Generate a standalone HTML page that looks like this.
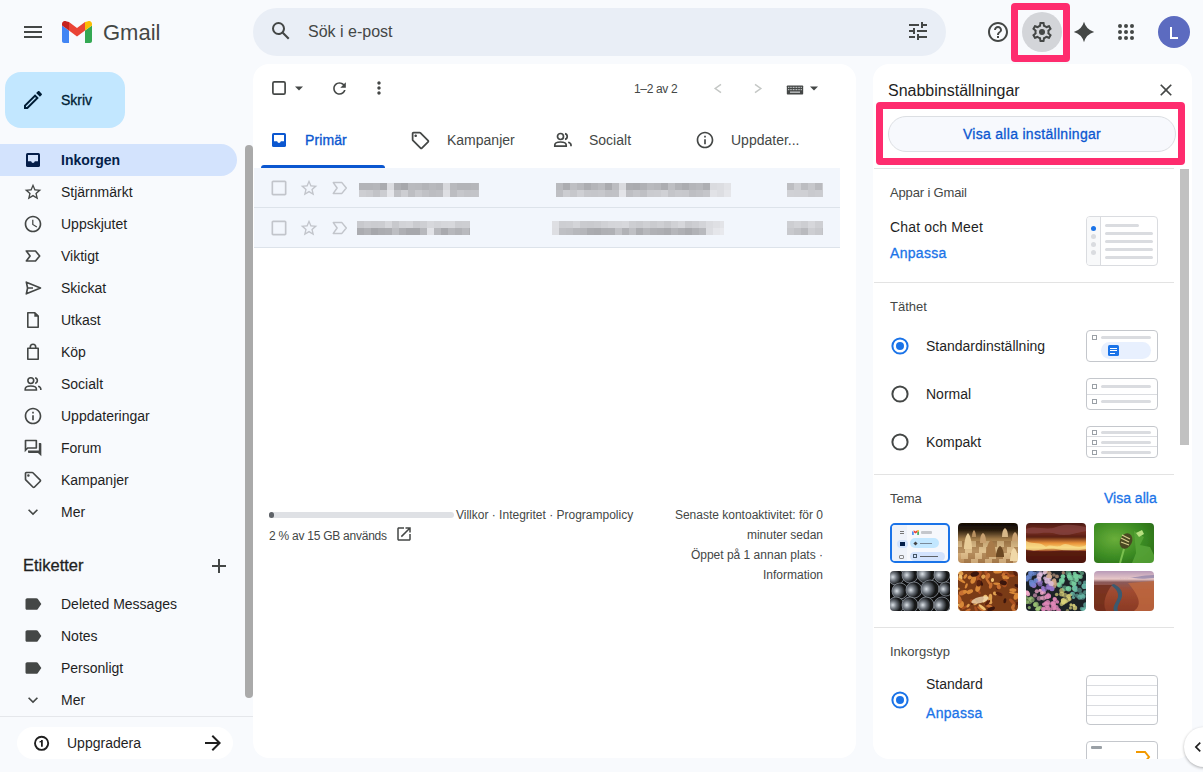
<!DOCTYPE html>
<html><head><meta charset="utf-8">
<style>
*{box-sizing:border-box;margin:0;padding:0}
html,body{width:1203px;height:772px;overflow:hidden;background:#f8fafd;font-family:"Liberation Sans",sans-serif;color:#1f1f1f}
.a{position:absolute}
svg{display:block}
.nav{position:absolute;left:0;height:32px;width:237px;display:flex;align-items:center;font-size:14px;color:#1f1f1f}
.nav .ic{position:absolute;left:23px;top:6px;width:20px;height:20px}
.nav .t{position:absolute;left:61px;top:8px;line-height:16px}
.sel{background:#d3e3fd;border-radius:0 16px 16px 0;font-weight:bold;color:#041e49}
.txt{position:absolute;white-space:nowrap}
.med{-webkit-text-stroke:0.3px currentColor}
</style></head><body>

<!-- header -->
<div class="a" style="left:24px;top:26px;width:18px;height:2px;background:#444746"></div>
<div class="a" style="left:24px;top:31px;width:18px;height:2px;background:#444746"></div>
<div class="a" style="left:24px;top:36px;width:18px;height:2px;background:#444746"></div>

<svg class="a" style="left:62px;top:21px" width="30" height="22" viewBox="0 0 30 22">
  <path d="M2 22h5V9.5L0 4.5V20c0 1.1.9 2 2 2z" fill="#4285f4"/>
  <path d="M23 22h5c1.1 0 2-.9 2-2V4.5l-7 5z" fill="#34a853"/>
  <path d="M23 1v8.5l7-5V3c0-2.5-2.8-3.9-4.8-2.4z" fill="#fbbc04"/>
  <path d="M7 9.5V1l8 6 8-6v8.5l-8 6z" fill="#ea4335"/>
  <path d="M0 3v1.5l7 5V1L4.8.6C2.8-.9 0 .5 0 3z" fill="#c5221f"/>
</svg>
<div class="txt" style="left:103px;top:19px;font-size:22px;line-height:28px;color:#444746">Gmail</div>


<!-- compose -->
<div class="a" style="left:5px;top:72px;width:120px;height:56px;border-radius:16px;background:#c2e7ff"></div>
<svg class="a" style="left:21px;top:88px" width="24" height="24" viewBox="0 0 24 24"><path fill="#001d35" d="M3 17.25V21h3.75L17.81 9.94l-3.75-3.75L3 17.25zM5.92 19H5v-.92l9.06-9.06.92.92L5.92 19zM20.71 5.63l-2.34-2.34c-.2-.2-.45-.29-.71-.29s-.51.1-.7.29l-1.83 1.83 3.75 3.75 1.83-1.83c.39-.39.39-1.02 0-1.41z"/></svg>
<div class="txt med" style="left:61px;top:92px;font-size:14px;line-height:16px;color:#001d35">Skriv</div>

<!-- nav -->
<div class="nav sel" style="top:144px"><svg class="ic" width="20" height="20" viewBox="0 0 20 20" style="left:23px;top:6px"><rect x="3" y="3" width="14" height="14" rx="1.6" fill="#041e49"/><path d="M5 5h10v6.3h-3.2c-.3 1-1 1.6-1.8 1.6s-1.5-.6-1.8-1.6H5z" fill="#d3e3fd"/></svg><span class="t">Inkorgen</span></div>
<div class="nav" style="top:176px"><svg class="ic" width="20" height="20" viewBox="0 0 24 24"><path fill="#444746" d="M22 9.24l-7.19-.62L12 2 9.19 8.63 2 9.24l5.46 4.73L5.82 21 12 17.27 18.18 21l-1.63-7.03L22 9.24zM12 15.4l-3.76 2.27 1-4.28-3.32-2.88 4.38-.38L12 6.1l1.71 4.04 4.38.38-3.32 2.880 1 4.28L12 15.4z"/></svg><span class="t">Stjärnmärkt</span></div>
<div class="nav" style="top:208px"><svg class="ic" width="20" height="20" viewBox="0 0 24 24"><path fill="#444746" d="M11.99 2C6.47 2 2 6.48 2 12s4.47 10 9.99 10C17.52 22 22 17.52 22 12S17.52 2 11.99 2zM12 20c-4.42 0-8-3.58-8-8s3.58-8 8-8 8 3.58 8 8-3.58 8-8 8zm.5-13H11v6l5.25 3.15.75-1.23-4.5-2.67z"/></svg><span class="t">Uppskjutet</span></div>
<div class="nav" style="top:240px"><svg class="ic" width="20" height="20" viewBox="0 0 24 24"><path fill="none" stroke="#444746" stroke-width="2" stroke-linejoin="round" d="M4 6h11l5 6-5 6H4l4.5-6z"/></svg><span class="t">Viktigt</span></div>
<div class="nav" style="top:272px"><svg class="ic" width="20" height="20" viewBox="0 0 24 24"><path fill="none" stroke="#444746" stroke-width="2" stroke-linejoin="round" d="M4 5l17 7-17 7 1.5-7zM5.5 12H12"/></svg><span class="t">Skickat</span></div>
<div class="nav" style="top:304px"><svg class="ic" width="20" height="20" viewBox="0 0 20 20"><path fill="none" stroke="#444746" stroke-width="1.6" stroke-linejoin="round" d="M4.8 2.7h7l3.4 3.4v11.1H4.8z"/><path fill="#444746" d="M11.3 2.7h.8l3.1 3.1v.9h-3.9z"/></svg><span class="t">Utkast</span></div>
<div class="nav" style="top:336px"><svg class="ic" width="20" height="20" viewBox="0 0 20 20"><path fill="none" stroke="#444746" stroke-width="1.6" stroke-linejoin="round" d="M4.8 6.3h10.4v10.9H4.8zM7.3 6.3V5a2.7 2.7 0 0 1 5.4 0v1.3"/></svg><span class="t">Köp</span></div>
<div class="nav" style="top:368px"><svg class="ic" width="20" height="20" viewBox="0 0 20 20"><g fill="none" stroke="#444746" stroke-width="1.6"><circle cx="7.8" cy="6.6" r="2.9"/><path d="M2.2 16v-1c0-1.8 2.5-3 5.6-3s5.6 1.2 5.6 3v1z"/><path d="M12.2 3.8a2.9 2.9 0 0 1 0 5.6M15.2 12.2c1.5.5 2.6 1.4 2.6 2.8v1"/></g></svg><span class="t">Socialt</span></div>
<div class="nav" style="top:400px"><svg class="ic" width="20" height="20" viewBox="0 0 24 24"><path fill="#444746" d="M11 7h2v2h-2zm0 4h2v6h-2zm1-9C6.48 2 2 6.48 2 12s4.48 10 10 10 10-4.48 10-10S17.52 2 12 2zm0 18c-4.41 0-8-3.59-8-8s3.59-8 8-8 8 3.59 8 8-3.59 8-8 8z"/></svg><span class="t">Uppdateringar</span></div>
<div class="nav" style="top:432px"><svg class="ic" width="20" height="20" viewBox="0 0 24 24"><path fill="#444746" d="M15 4v7H5.17L4 12.17V4h11m1-2H3c-.55 0-1 .45-1 1v14l4-4h10c.55 0 1-.45 1-1V3c0-.55-.45-1-1-1zm5 4h-2v9H6v2c0 .55.45 1 1 1h11l4 4V7c0-.55-.45-1-1-1z"/></svg><span class="t">Forum</span></div>
<div class="nav" style="top:464px"><svg class="ic" width="20" height="20" viewBox="0 0 24 24"><path fill="#444746" d="M21.41 11.41l-8.83-8.83c-.37-.37-.88-.58-1.41-.58H4c-1.1 0-2 .9-2 2v7.17c0 .53.21 1.04.59 1.41l8.83 8.830c.78.78 2.05.78 2.83 0l7.17-7.17c.78-.78.78-2.04-.01-2.83zM12.83 20L4 11.17V4h7.17L20 12.83 12.83 20zM6.5 5C7.33 5 8 5.67 8 6.5S7.33 8 6.5 8 5 7.33 5 6.5 5.67 5 6.5 5z"/></svg><span class="t">Kampanjer</span></div>
<div class="nav" style="top:496px"><svg class="ic" width="20" height="20" viewBox="0 0 24 24"><path fill="#444746" d="M16.59 8.59L12 13.17 7.41 8.59 6 10l6 6 6-6z"/></svg><span class="t">Mer</span></div>

<div class="txt med" style="left:23px;top:555px;font-size:16.5px;line-height:20px;color:#1f1f1f">Etiketter</div>
<svg class="a" style="left:207px;top:554px" width="24" height="24" viewBox="0 0 24 24"><path fill="#444746" d="M19 13h-6v6h-2v-6H5v-2h6V5h2v6h6v2z"/></svg>

<div class="nav" style="top:588px"><svg class="ic" width="20" height="20" viewBox="0 0 24 24"><path fill="#444746" d="M17.63 5.84C17.27 5.33 16.67 5 16 5L5 5.01C3.9 5.01 3 5.9 3 7v10c0 1.1.9 1.99 2 1.99L16 19c.67 0 1.27-.33 1.63-.84L22 12l-4.37-6.16z"/></svg><span class="t">Deleted Messages</span></div>
<div class="nav" style="top:620px"><svg class="ic" width="20" height="20" viewBox="0 0 24 24"><path fill="#444746" d="M17.63 5.84C17.27 5.33 16.67 5 16 5L5 5.01C3.9 5.01 3 5.9 3 7v10c0 1.1.9 1.99 2 1.99L16 19c.67 0 1.27-.33 1.63-.84L22 12l-4.37-6.16z"/></svg><span class="t">Notes</span></div>
<div class="nav" style="top:652px"><svg class="ic" width="20" height="20" viewBox="0 0 24 24"><path fill="#444746" d="M17.63 5.84C17.27 5.33 16.67 5 16 5L5 5.01C3.9 5.01 3 5.9 3 7v10c0 1.1.9 1.99 2 1.99L16 19c.67 0 1.27-.33 1.63-.84L22 12l-4.37-6.16z"/></svg><span class="t">Personligt</span></div>
<div class="nav" style="top:684px"><svg class="ic" width="20" height="20" viewBox="0 0 24 24"><path fill="#444746" d="M16.59 8.59L12 13.17 7.41 8.59 6 10l6 6 6-6z"/></svg><span class="t">Mer</span></div>

<!-- sidebar scrollbar -->
<div class="a" style="left:245px;top:145px;width:8px;height:553px;border-radius:4px;background:#aaaaaa"></div>
<div class="a" style="left:0;top:716px;width:253px;height:1px;background:#e5e7eb"></div>
<div class="a" style="left:17px;top:727px;width:216px;height:32px;border-radius:16px;background:#fff"></div>
<svg class="a" style="left:32px;top:734px" width="20" height="20" viewBox="0 0 20 20"><circle cx="9.6" cy="9.3" r="6.6" fill="none" stroke="#1f1f1f" stroke-width="1.9"/><path fill="#1f1f1f" d="M9 6h1.8v6.8H9zM7.6 7.1L9.4 6h.6v1.6L7.6 8.7z"/></svg>
<div class="txt" style="left:67px;top:735px;font-size:14px;line-height:16px;color:#1f1f1f">Uppgradera</div>
<svg class="a" style="left:201px;top:731px" width="24" height="24" viewBox="0 0 24 24"><path fill="#1f1f1f" d="M12 4l-1.41 1.41L16.17 11H4v2h12.17l-5.58 5.59L12 20l8-8z"/></svg>

<!-- search -->
<div class="a" style="left:253px;top:8px;width:693px;height:48px;border-radius:24px;background:#e9eef6"></div>
<svg class="a" style="left:269px;top:19px" width="24" height="24" viewBox="0 0 24 24"><path fill="#444746" d="M20.49 19l-5.73-5.73C15.53 12.2 16 10.91 16 9.5A6.5 6.5 0 1 0 9.5 16c1.41 0 2.7-.47 3.77-1.24L19 20.49 20.49 19zM5 9.5C5 7.01 7.01 5 9.5 5S14 7.01 14 9.5 11.99 14 9.5 14 5 11.99 5 9.5z"/></svg>
<div class="txt" style="left:308px;top:22px;font-size:16px;line-height:20px;color:#444746">Sök i e-post</div>
<svg class="a" style="left:906px;top:19px" width="24" height="24" viewBox="0 0 24 24"><path fill="#444746" d="M3 17v2h6v-2H3zM3 5v2h10V5H3zm10 16v-2h8v-2h-8v-2h-2v6h2zM7 9v2H3v2h4v2h2V9H7zm14 4v-2H11v2h10zm-6-4h2V7h4V5h-4V3h-2v6z"/></svg>

<!-- main panel -->
<div class="a" style="left:253px;top:64px;width:603px;height:694px;border-radius:16px;background:#fff"></div>

<!-- quick settings panel -->
<div class="a" style="left:873px;top:64px;width:319px;height:695px;border-radius:16px;background:#fff"></div>


<!-- toolbar -->
<svg class="a" style="left:270px;top:79px" width="18" height="18" viewBox="0 0 18 18"><rect x="2.9" y="2.9" width="12.2" height="12.2" rx="1.4" fill="none" stroke="#444746" stroke-width="1.7"/></svg>
<svg class="a" style="left:289px;top:78px" width="20" height="20" viewBox="0 0 20 20"><path fill="#444746" d="M6 8.5l4 4 4-4z"/></svg>
<svg class="a" style="left:330px;top:79px" width="19" height="19" viewBox="0 0 24 24"><path fill="#444746" d="M17.65 6.35C16.2 4.9 14.21 4 12 4c-4.42 0-7.99 3.58-7.99 8s3.57 8 7.990 8c3.73 0 6.84-2.55 7.73-6h-2.08c-.82 2.33-3.04 4-5.65 4-3.31 0-6-2.69-6-6s2.69-6 6-6c1.66 0 3.14.69 4.22 1.78L13 11h7V4l-2.35 2.35z"/></svg>
<svg class="a" style="left:369px;top:78px" width="20" height="20" viewBox="0 0 24 24"><path fill="#444746" d="M12 8c1.1 0 2-.9 2-2s-.9-2-2-2-2 .9-2 2 .9 2 2 2zm0 2c-1.1 0-2 .9-2 2s.9 2 2 2 2-.9 2-2-.9-2-2-2zm0 6c-1.1 0-2 .9-2 2s.9 2 2 2 2-.9 2-2-.9-2-2-2z"/></svg>
<div class="txt" style="left:634px;top:82px;font-size:12px;line-height:14px;color:#444746;letter-spacing:-0.35px">1–2 av 2</div>
<svg class="a" style="left:712px;top:82px" width="12" height="13" viewBox="0 0 12 13"><path d="M9 2.3L3.2 6.5 9 10.7" fill="none" stroke="#c4c7c5" stroke-width="1.5"/></svg>
<svg class="a" style="left:752px;top:82px" width="12" height="13" viewBox="0 0 12 13"><path d="M3 2.3L8.8 6.5 3 10.7" fill="none" stroke="#c4c7c5" stroke-width="1.5"/></svg>
<svg class="a" style="left:786px;top:85px" width="18" height="10" viewBox="0 0 19 11"><rect x="0.5" y="0.5" width="18" height="10" rx="0.8" fill="#444746"/><rect x="2.00" y="2" width="1" height="1.2" fill="#d8dadc"/><rect x="3.75" y="2" width="1" height="1.2" fill="#d8dadc"/><rect x="5.50" y="2" width="1" height="1.2" fill="#d8dadc"/><rect x="7.25" y="2" width="1" height="1.2" fill="#d8dadc"/><rect x="9.00" y="2" width="1" height="1.2" fill="#d8dadc"/><rect x="10.75" y="2" width="1" height="1.2" fill="#d8dadc"/><rect x="12.50" y="2" width="1" height="1.2" fill="#d8dadc"/><rect x="14.25" y="2" width="1" height="1.2" fill="#d8dadc"/><rect x="16.00" y="2" width="1" height="1.2" fill="#d8dadc"/><rect x="2.00" y="4.5" width="1" height="1.2" fill="#d8dadc"/><rect x="3.75" y="4.5" width="1" height="1.2" fill="#d8dadc"/><rect x="5.50" y="4.5" width="1" height="1.2" fill="#d8dadc"/><rect x="7.25" y="4.5" width="1" height="1.2" fill="#d8dadc"/><rect x="9.00" y="4.5" width="1" height="1.2" fill="#d8dadc"/><rect x="10.75" y="4.5" width="1" height="1.2" fill="#d8dadc"/><rect x="12.50" y="4.5" width="1" height="1.2" fill="#d8dadc"/><rect x="14.25" y="4.5" width="1" height="1.2" fill="#d8dadc"/><rect x="16.00" y="4.5" width="1" height="1.2" fill="#d8dadc"/><rect x="4" y="7.2" width="11" height="1.3" fill="#d8dadc"/></svg>
<svg class="a" style="left:804px;top:78px" width="20" height="20" viewBox="0 0 20 20"><path fill="#444746" d="M6 8.5l4 4 4-4z"/></svg>

<!-- tabs -->
<svg class="a" style="left:269px;top:130px" width="20" height="20" viewBox="0 0 20 20"><rect x="3" y="3" width="14" height="14" rx="1.6" fill="#0b57d0"/><path d="M5 5h10v6.3h-3.2c-.3 1-1 1.6-1.8 1.6s-1.5-.6-1.8-1.6H5z" fill="#fff"/></svg>
<div class="txt" style="left:305px;top:132px;font-size:14px;line-height:16px;color:#0b57d0;-webkit-text-stroke:0.35px #0b57d0;letter-spacing:0.1px">Primär</div>
<div class="a" style="left:261px;top:165px;width:124px;height:3px;border-radius:3px 3px 0 0;background:#0b57d0"></div>
<svg class="a" style="left:410px;top:130px" width="21" height="21" viewBox="0 0 24 24"><path fill="#444746" d="M21.41 11.41l-8.83-8.83c-.37-.37-.88-.58-1.41-.58H4c-1.1 0-2 .9-2 2v7.17c0 .53.21 1.04.59 1.41l8.83 8.830c.78.78 2.05.78 2.83 0l7.17-7.17c.78-.78.78-2.04-.01-2.83zM12.83 20L4 11.17V4h7.17L20 12.83 12.83 20zM6.5 5C7.33 5 8 5.67 8 6.5S7.33 8 6.5 8 5 7.33 5 6.5 5.67 5 6.5 5z"/></svg>
<div class="txt" style="left:447px;top:132px;font-size:14px;line-height:16px;color:#444746">Kampanjer</div>
<svg class="a" style="left:553px;top:130px" width="20" height="20" viewBox="0 0 20 20"><g fill="none" stroke="#444746" stroke-width="1.7"><circle cx="7.5" cy="6.5" r="3"/><path d="M1.8 16.2v-1.2c0-1.8 2.6-3 5.7-3s5.7 1.2 5.7 3v1.2z"/><path d="M12 3.6a3 3 0 0 1 0 5.8M15.2 12.3c1.6.5 2.8 1.4 2.8 2.7v1.2"/></g></svg>
<div class="txt" style="left:589px;top:132px;font-size:14px;line-height:16px;color:#444746">Socialt</div>
<svg class="a" style="left:695px;top:130px" width="20" height="20" viewBox="0 0 24 24"><path fill="#444746" d="M11 7h2v2h-2zm0 4h2v6h-2zm1-9C6.48 2 2 6.48 2 12s4.48 10 10 10 10-4.48 10-10S17.52 2 12 2zm0 18c-4.41 0-8-3.59-8-8s3.59-8 8-8 8 3.59 8 8-3.59 8-8 8z"/></svg>
<div class="txt" style="left:731px;top:132px;font-size:14px;line-height:16px;color:#444746">Uppdater...</div>

<!-- rows -->
<div class="a" style="left:254px;top:168px;width:586px;height:80px;background:#f2f6fc"></div>
<div class="a" style="left:254px;top:207px;width:586px;height:1px;background:#dde3ea"></div>
<div class="a" style="left:254px;top:247px;width:586px;height:1px;background:#dde3ea"></div>
<svg class="a" style="left:269px;top:178px" width="20" height="20" viewBox="0 0 24 24"><path fill="#c2c5cb" d="M19 5v14H5V5h14m0-2H5c-1.1 0-2 .9-2 2v14c0 1.1.9 2 2 2h14c1.1 0 2-.9 2-2V5c0-1.1-.9-2-2-2z"/></svg>
<svg class="a" style="left:299px;top:178px" width="20" height="20" viewBox="0 0 24 24"><path fill="#c2c5cb" d="M22 9.24l-7.19-.62L12 2 9.19 8.63 2 9.24l5.46 4.73L5.82 21 12 17.27 18.18 21l-1.63-7.03L22 9.24zM12 15.4l-3.76 2.27 1-4.28-3.32-2.88 4.38-.38L12 6.1l1.71 4.04 4.38.38-3.32 2.88 1 4.28L12 15.4z"/></svg>
<svg class="a" style="left:330px;top:178px" width="20" height="20" viewBox="0 0 20 20"><path fill="none" stroke="#c2c5cb" stroke-width="1.5" stroke-linejoin="round" d="M3.3 4.6h8.6l4.4 5.4-4.4 5.4H3.3l3.8-5.4z"/></svg>
<svg class="a" style="left:269px;top:218px" width="20" height="20" viewBox="0 0 24 24"><path fill="#c2c5cb" d="M19 5v14H5V5h14m0-2H5c-1.1 0-2 .9-2 2v14c0 1.1.9 2 2 2h14c1.1 0 2-.9 2-2V5c0-1.1-.9-2-2-2z"/></svg>
<svg class="a" style="left:299px;top:218px" width="20" height="20" viewBox="0 0 24 24"><path fill="#c2c5cb" d="M22 9.24l-7.19-.62L12 2 9.19 8.63 2 9.24l5.46 4.73L5.82 21 12 17.27 18.18 21l-1.63-7.03L22 9.24zM12 15.4l-3.76 2.27 1-4.28-3.32-2.88 4.38-.38L12 6.1l1.71 4.04 4.38.38-3.32 2.88 1 4.28L12 15.4z"/></svg>
<svg class="a" style="left:330px;top:218px" width="20" height="20" viewBox="0 0 20 20"><path fill="none" stroke="#c2c5cb" stroke-width="1.5" stroke-linejoin="round" d="M3.3 4.6h8.6l4.4 5.4-4.4 5.4H3.3l3.8-5.4z"/></svg>

<div class="a" style="filter:blur(0.5px)"><div class="a" style="left:359px;top:183px;width:7px;height:7px;background:rgb(179,180,184)"></div><div class="a" style="left:359px;top:190px;width:7px;height:7px;background:rgb(205,206,210)"></div><div class="a" style="left:366px;top:183px;width:7px;height:7px;background:rgb(179,180,184)"></div><div class="a" style="left:366px;top:190px;width:7px;height:7px;background:rgb(202,203,207)"></div><div class="a" style="left:373px;top:183px;width:7px;height:7px;background:rgb(181,182,186)"></div><div class="a" style="left:373px;top:190px;width:7px;height:7px;background:rgb(194,195,199)"></div><div class="a" style="left:380px;top:183px;width:7px;height:7px;background:rgb(170,171,175)"></div><div class="a" style="left:380px;top:190px;width:7px;height:7px;background:rgb(204,205,209)"></div><div class="a" style="left:387px;top:183px;width:7px;height:7px;background:rgb(220,221,225)"></div><div class="a" style="left:387px;top:190px;width:7px;height:7px;background:rgb(229,230,234)"></div><div class="a" style="left:394px;top:183px;width:7px;height:7px;background:rgb(174,175,179)"></div><div class="a" style="left:394px;top:190px;width:7px;height:7px;background:rgb(192,193,197)"></div><div class="a" style="left:401px;top:183px;width:7px;height:7px;background:rgb(167,168,172)"></div><div class="a" style="left:401px;top:190px;width:7px;height:7px;background:rgb(205,206,210)"></div><div class="a" style="left:408px;top:183px;width:7px;height:7px;background:rgb(185,186,190)"></div><div class="a" style="left:408px;top:190px;width:7px;height:7px;background:rgb(189,190,194)"></div><div class="a" style="left:415px;top:183px;width:7px;height:7px;background:rgb(184,185,189)"></div><div class="a" style="left:415px;top:190px;width:7px;height:7px;background:rgb(200,201,205)"></div><div class="a" style="left:422px;top:183px;width:7px;height:7px;background:rgb(179,180,184)"></div><div class="a" style="left:422px;top:190px;width:7px;height:7px;background:rgb(193,194,198)"></div><div class="a" style="left:429px;top:183px;width:7px;height:7px;background:rgb(184,185,189)"></div><div class="a" style="left:429px;top:190px;width:7px;height:7px;background:rgb(188,189,193)"></div><div class="a" style="left:436px;top:183px;width:7px;height:7px;background:rgb(181,182,186)"></div><div class="a" style="left:436px;top:190px;width:7px;height:7px;background:rgb(190,191,195)"></div><div class="a" style="left:443px;top:183px;width:7px;height:7px;background:rgb(216,217,221)"></div><div class="a" style="left:443px;top:190px;width:7px;height:7px;background:rgb(222,223,227)"></div><div class="a" style="left:450px;top:183px;width:7px;height:7px;background:rgb(184,185,189)"></div><div class="a" style="left:450px;top:190px;width:7px;height:7px;background:rgb(188,189,193)"></div><div class="a" style="left:457px;top:183px;width:7px;height:7px;background:rgb(179,180,184)"></div><div class="a" style="left:457px;top:190px;width:7px;height:7px;background:rgb(198,199,203)"></div><div class="a" style="left:464px;top:183px;width:7px;height:7px;background:rgb(179,180,184)"></div><div class="a" style="left:464px;top:190px;width:7px;height:7px;background:rgb(194,195,199)"></div><div class="a" style="left:471px;top:183px;width:7px;height:7px;background:rgb(181,182,186)"></div><div class="a" style="left:471px;top:190px;width:7px;height:7px;background:rgb(195,196,200)"></div><div class="a" style="left:478px;top:183px;width:1px;height:7px;background:rgb(185,186,190)"></div><div class="a" style="left:478px;top:190px;width:1px;height:7px;background:rgb(197,198,202)"></div><div class="a" style="left:556px;top:183px;width:7px;height:7px;background:rgb(185,186,190)"></div><div class="a" style="left:556px;top:190px;width:7px;height:7px;background:rgb(190,191,195)"></div><div class="a" style="left:563px;top:183px;width:7px;height:7px;background:rgb(172,173,177)"></div><div class="a" style="left:563px;top:190px;width:7px;height:7px;background:rgb(204,205,209)"></div><div class="a" style="left:570px;top:183px;width:7px;height:7px;background:rgb(190,191,195)"></div><div class="a" style="left:570px;top:190px;width:7px;height:7px;background:rgb(198,199,203)"></div><div class="a" style="left:577px;top:183px;width:7px;height:7px;background:rgb(183,184,188)"></div><div class="a" style="left:577px;top:190px;width:7px;height:7px;background:rgb(207,208,212)"></div><div class="a" style="left:584px;top:183px;width:7px;height:7px;background:rgb(172,173,177)"></div><div class="a" style="left:584px;top:190px;width:7px;height:7px;background:rgb(198,199,203)"></div><div class="a" style="left:591px;top:183px;width:7px;height:7px;background:rgb(180,181,185)"></div><div class="a" style="left:591px;top:190px;width:7px;height:7px;background:rgb(197,198,202)"></div><div class="a" style="left:598px;top:183px;width:7px;height:7px;background:rgb(186,187,191)"></div><div class="a" style="left:598px;top:190px;width:7px;height:7px;background:rgb(199,200,204)"></div><div class="a" style="left:605px;top:183px;width:7px;height:7px;background:rgb(170,171,175)"></div><div class="a" style="left:605px;top:190px;width:7px;height:7px;background:rgb(192,193,197)"></div><div class="a" style="left:612px;top:183px;width:7px;height:7px;background:rgb(188,189,193)"></div><div class="a" style="left:612px;top:190px;width:7px;height:7px;background:rgb(193,194,198)"></div><div class="a" style="left:619px;top:183px;width:7px;height:7px;background:rgb(218,219,223)"></div><div class="a" style="left:619px;top:190px;width:7px;height:7px;background:rgb(227,228,232)"></div><div class="a" style="left:626px;top:183px;width:7px;height:7px;background:rgb(172,173,177)"></div><div class="a" style="left:626px;top:190px;width:7px;height:7px;background:rgb(190,191,195)"></div><div class="a" style="left:633px;top:183px;width:7px;height:7px;background:rgb(170,171,175)"></div><div class="a" style="left:633px;top:190px;width:7px;height:7px;background:rgb(196,197,201)"></div><div class="a" style="left:640px;top:183px;width:7px;height:7px;background:rgb(176,177,181)"></div><div class="a" style="left:640px;top:190px;width:7px;height:7px;background:rgb(191,192,196)"></div><div class="a" style="left:647px;top:183px;width:7px;height:7px;background:rgb(185,186,190)"></div><div class="a" style="left:647px;top:190px;width:7px;height:7px;background:rgb(202,203,207)"></div><div class="a" style="left:654px;top:183px;width:7px;height:7px;background:rgb(182,183,187)"></div><div class="a" style="left:654px;top:190px;width:7px;height:7px;background:rgb(203,204,208)"></div><div class="a" style="left:661px;top:183px;width:7px;height:7px;background:rgb(172,173,177)"></div><div class="a" style="left:661px;top:190px;width:7px;height:7px;background:rgb(208,209,213)"></div><div class="a" style="left:668px;top:183px;width:7px;height:7px;background:rgb(190,191,195)"></div><div class="a" style="left:668px;top:190px;width:7px;height:7px;background:rgb(196,197,201)"></div><div class="a" style="left:675px;top:183px;width:7px;height:7px;background:rgb(178,179,183)"></div><div class="a" style="left:675px;top:190px;width:7px;height:7px;background:rgb(200,201,205)"></div><div class="a" style="left:682px;top:183px;width:7px;height:7px;background:rgb(172,173,177)"></div><div class="a" style="left:682px;top:190px;width:7px;height:7px;background:rgb(199,200,204)"></div><div class="a" style="left:689px;top:183px;width:7px;height:7px;background:rgb(180,181,185)"></div><div class="a" style="left:689px;top:190px;width:7px;height:7px;background:rgb(190,191,195)"></div><div class="a" style="left:696px;top:183px;width:7px;height:7px;background:rgb(183,184,188)"></div><div class="a" style="left:696px;top:190px;width:7px;height:7px;background:rgb(193,194,198)"></div><div class="a" style="left:703px;top:183px;width:7px;height:7px;background:rgb(174,175,179)"></div><div class="a" style="left:703px;top:190px;width:7px;height:7px;background:rgb(197,198,202)"></div><div class="a" style="left:710px;top:183px;width:7px;height:7px;background:rgb(218,219,223)"></div><div class="a" style="left:710px;top:190px;width:7px;height:7px;background:rgb(225,226,230)"></div><div class="a" style="left:717px;top:183px;width:7px;height:7px;background:rgb(220,221,225)"></div><div class="a" style="left:717px;top:190px;width:7px;height:7px;background:rgb(221,222,226)"></div><div class="a" style="left:724px;top:183px;width:7px;height:7px;background:rgb(226,227,231)"></div><div class="a" style="left:724px;top:190px;width:7px;height:7px;background:rgb(229,230,234)"></div><div class="a" style="left:787px;top:183px;width:7px;height:7px;background:rgb(189,190,194)"></div><div class="a" style="left:787px;top:190px;width:7px;height:7px;background:rgb(208,209,213)"></div><div class="a" style="left:794px;top:183px;width:7px;height:7px;background:rgb(205,206,210)"></div><div class="a" style="left:794px;top:190px;width:7px;height:7px;background:rgb(207,208,212)"></div><div class="a" style="left:801px;top:183px;width:7px;height:7px;background:rgb(188,189,193)"></div><div class="a" style="left:801px;top:190px;width:7px;height:7px;background:rgb(207,208,212)"></div><div class="a" style="left:808px;top:183px;width:7px;height:7px;background:rgb(198,199,203)"></div><div class="a" style="left:808px;top:190px;width:7px;height:7px;background:rgb(201,202,206)"></div><div class="a" style="left:815px;top:183px;width:7px;height:7px;background:rgb(185,186,190)"></div><div class="a" style="left:815px;top:190px;width:7px;height:7px;background:rgb(203,204,208)"></div><div class="a" style="left:822px;top:183px;width:1px;height:7px;background:rgb(203,204,208)"></div><div class="a" style="left:822px;top:190px;width:1px;height:7px;background:rgb(204,205,209)"></div><div class="a" style="left:357px;top:221px;width:7px;height:7px;background:rgb(200,201,205)"></div><div class="a" style="left:357px;top:228px;width:7px;height:7px;background:rgb(171,172,176)"></div><div class="a" style="left:364px;top:221px;width:7px;height:7px;background:rgb(205,206,210)"></div><div class="a" style="left:364px;top:228px;width:7px;height:7px;background:rgb(177,178,182)"></div><div class="a" style="left:371px;top:221px;width:7px;height:7px;background:rgb(203,204,208)"></div><div class="a" style="left:371px;top:228px;width:7px;height:7px;background:rgb(166,167,171)"></div><div class="a" style="left:378px;top:221px;width:7px;height:7px;background:rgb(204,205,209)"></div><div class="a" style="left:378px;top:228px;width:7px;height:7px;background:rgb(171,172,176)"></div><div class="a" style="left:385px;top:221px;width:7px;height:7px;background:rgb(214,215,219)"></div><div class="a" style="left:385px;top:228px;width:7px;height:7px;background:rgb(173,174,178)"></div><div class="a" style="left:392px;top:221px;width:7px;height:7px;background:rgb(200,201,205)"></div><div class="a" style="left:392px;top:228px;width:7px;height:7px;background:rgb(189,190,194)"></div><div class="a" style="left:399px;top:221px;width:7px;height:7px;background:rgb(210,211,215)"></div><div class="a" style="left:399px;top:228px;width:7px;height:7px;background:rgb(174,175,179)"></div><div class="a" style="left:406px;top:221px;width:7px;height:7px;background:rgb(212,213,217)"></div><div class="a" style="left:406px;top:228px;width:7px;height:7px;background:rgb(167,168,172)"></div><div class="a" style="left:413px;top:221px;width:7px;height:7px;background:rgb(202,203,207)"></div><div class="a" style="left:413px;top:228px;width:7px;height:7px;background:rgb(167,168,172)"></div><div class="a" style="left:420px;top:221px;width:7px;height:7px;background:rgb(206,207,211)"></div><div class="a" style="left:420px;top:228px;width:7px;height:7px;background:rgb(183,184,188)"></div><div class="a" style="left:427px;top:221px;width:7px;height:7px;background:rgb(215,216,220)"></div><div class="a" style="left:427px;top:228px;width:7px;height:7px;background:rgb(226,227,231)"></div><div class="a" style="left:434px;top:221px;width:7px;height:7px;background:rgb(211,212,216)"></div><div class="a" style="left:434px;top:228px;width:7px;height:7px;background:rgb(184,185,189)"></div><div class="a" style="left:441px;top:221px;width:7px;height:7px;background:rgb(214,215,219)"></div><div class="a" style="left:441px;top:228px;width:7px;height:7px;background:rgb(169,170,174)"></div><div class="a" style="left:448px;top:221px;width:7px;height:7px;background:rgb(215,216,220)"></div><div class="a" style="left:448px;top:228px;width:7px;height:7px;background:rgb(183,184,188)"></div><div class="a" style="left:455px;top:221px;width:7px;height:7px;background:rgb(204,205,209)"></div><div class="a" style="left:455px;top:228px;width:7px;height:7px;background:rgb(177,178,182)"></div><div class="a" style="left:462px;top:221px;width:7px;height:7px;background:rgb(205,206,210)"></div><div class="a" style="left:462px;top:228px;width:7px;height:7px;background:rgb(185,186,190)"></div><div class="a" style="left:469px;top:221px;width:1px;height:7px;background:rgb(204,205,209)"></div><div class="a" style="left:469px;top:228px;width:1px;height:7px;background:rgb(174,175,179)"></div><div class="a" style="left:552px;top:221px;width:7px;height:7px;background:rgb(222,223,227)"></div><div class="a" style="left:552px;top:228px;width:7px;height:7px;background:rgb(221,222,226)"></div><div class="a" style="left:559px;top:221px;width:7px;height:7px;background:rgb(205,206,210)"></div><div class="a" style="left:559px;top:228px;width:7px;height:7px;background:rgb(191,192,196)"></div><div class="a" style="left:566px;top:221px;width:7px;height:7px;background:rgb(206,207,211)"></div><div class="a" style="left:566px;top:228px;width:7px;height:7px;background:rgb(189,190,194)"></div><div class="a" style="left:573px;top:221px;width:7px;height:7px;background:rgb(212,213,217)"></div><div class="a" style="left:573px;top:228px;width:7px;height:7px;background:rgb(183,184,188)"></div><div class="a" style="left:580px;top:221px;width:7px;height:7px;background:rgb(202,203,207)"></div><div class="a" style="left:580px;top:228px;width:7px;height:7px;background:rgb(181,182,186)"></div><div class="a" style="left:587px;top:221px;width:7px;height:7px;background:rgb(201,202,206)"></div><div class="a" style="left:587px;top:228px;width:7px;height:7px;background:rgb(171,172,176)"></div><div class="a" style="left:594px;top:221px;width:7px;height:7px;background:rgb(203,204,208)"></div><div class="a" style="left:594px;top:228px;width:7px;height:7px;background:rgb(169,170,174)"></div><div class="a" style="left:601px;top:221px;width:7px;height:7px;background:rgb(208,209,213)"></div><div class="a" style="left:601px;top:228px;width:7px;height:7px;background:rgb(175,176,180)"></div><div class="a" style="left:608px;top:221px;width:7px;height:7px;background:rgb(212,213,217)"></div><div class="a" style="left:608px;top:228px;width:7px;height:7px;background:rgb(176,177,181)"></div><div class="a" style="left:615px;top:221px;width:7px;height:7px;background:rgb(213,214,218)"></div><div class="a" style="left:615px;top:228px;width:7px;height:7px;background:rgb(194,195,199)"></div><div class="a" style="left:622px;top:221px;width:7px;height:7px;background:rgb(215,216,220)"></div><div class="a" style="left:622px;top:228px;width:7px;height:7px;background:rgb(177,178,182)"></div><div class="a" style="left:629px;top:221px;width:7px;height:7px;background:rgb(205,206,210)"></div><div class="a" style="left:629px;top:228px;width:7px;height:7px;background:rgb(191,192,196)"></div><div class="a" style="left:636px;top:221px;width:7px;height:7px;background:rgb(202,203,207)"></div><div class="a" style="left:636px;top:228px;width:7px;height:7px;background:rgb(172,173,177)"></div><div class="a" style="left:643px;top:221px;width:7px;height:7px;background:rgb(207,208,212)"></div><div class="a" style="left:643px;top:228px;width:7px;height:7px;background:rgb(183,184,188)"></div><div class="a" style="left:650px;top:221px;width:7px;height:7px;background:rgb(202,203,207)"></div><div class="a" style="left:650px;top:228px;width:7px;height:7px;background:rgb(176,177,181)"></div><div class="a" style="left:657px;top:221px;width:7px;height:7px;background:rgb(206,207,211)"></div><div class="a" style="left:657px;top:228px;width:7px;height:7px;background:rgb(174,175,179)"></div><div class="a" style="left:664px;top:221px;width:7px;height:7px;background:rgb(200,201,205)"></div><div class="a" style="left:664px;top:228px;width:7px;height:7px;background:rgb(170,171,175)"></div><div class="a" style="left:671px;top:221px;width:7px;height:7px;background:rgb(208,209,213)"></div><div class="a" style="left:671px;top:228px;width:7px;height:7px;background:rgb(181,182,186)"></div><div class="a" style="left:678px;top:221px;width:7px;height:7px;background:rgb(214,215,219)"></div><div class="a" style="left:678px;top:228px;width:7px;height:7px;background:rgb(175,176,180)"></div><div class="a" style="left:685px;top:221px;width:7px;height:7px;background:rgb(201,202,206)"></div><div class="a" style="left:685px;top:228px;width:7px;height:7px;background:rgb(169,170,174)"></div><div class="a" style="left:692px;top:221px;width:7px;height:7px;background:rgb(205,206,210)"></div><div class="a" style="left:692px;top:228px;width:7px;height:7px;background:rgb(177,178,182)"></div><div class="a" style="left:699px;top:221px;width:7px;height:7px;background:rgb(211,212,216)"></div><div class="a" style="left:699px;top:228px;width:7px;height:7px;background:rgb(184,185,189)"></div><div class="a" style="left:706px;top:221px;width:7px;height:7px;background:rgb(219,220,224)"></div><div class="a" style="left:706px;top:228px;width:7px;height:7px;background:rgb(220,221,225)"></div><div class="a" style="left:713px;top:221px;width:7px;height:7px;background:rgb(223,224,228)"></div><div class="a" style="left:713px;top:228px;width:7px;height:7px;background:rgb(229,230,234)"></div><div class="a" style="left:720px;top:221px;width:4px;height:7px;background:rgb(227,228,232)"></div><div class="a" style="left:720px;top:228px;width:4px;height:7px;background:rgb(232,233,237)"></div><div class="a" style="left:787px;top:221px;width:7px;height:7px;background:rgb(205,206,210)"></div><div class="a" style="left:787px;top:228px;width:7px;height:7px;background:rgb(200,201,205)"></div><div class="a" style="left:794px;top:221px;width:7px;height:7px;background:rgb(210,211,215)"></div><div class="a" style="left:794px;top:228px;width:7px;height:7px;background:rgb(194,195,199)"></div><div class="a" style="left:801px;top:221px;width:7px;height:7px;background:rgb(205,206,210)"></div><div class="a" style="left:801px;top:228px;width:7px;height:7px;background:rgb(185,186,190)"></div><div class="a" style="left:808px;top:221px;width:7px;height:7px;background:rgb(214,215,219)"></div><div class="a" style="left:808px;top:228px;width:7px;height:7px;background:rgb(205,206,210)"></div><div class="a" style="left:815px;top:221px;width:7px;height:7px;background:rgb(206,207,211)"></div><div class="a" style="left:815px;top:228px;width:7px;height:7px;background:rgb(200,201,205)"></div><div class="a" style="left:822px;top:221px;width:1px;height:7px;background:rgb(206,207,211)"></div><div class="a" style="left:822px;top:228px;width:1px;height:7px;background:rgb(194,195,199)"></div></div>

<!-- header right icons -->
<svg class="a" style="left:986px;top:20px" width="24" height="24" viewBox="0 0 24 24"><path fill="#444746" d="M11 18h2v-2h-2v2zm1-16C6.48 2 2 6.48 2 12s4.48 10 10 10 10-4.48 10-10S17.52 2 12 2zm0 18c-4.41 0-8-3.59-8-8s3.59-8 8-8 8 3.59 8 8-3.59 8-8 8zm0-14c-2.21 0-4 1.79-4 4h2c0-1.1.9-2 2-2s2 .9 2 2c0 2-3 1.75-3 5h2c0-2.25 3-2.5 3-5 0-2.21-1.79-4-4-4z"/></svg>
<div class="a" style="left:1011px;top:3px;width:59px;height:59px;border-radius:4px;background:#fe2c6e"></div>
<div class="a" style="left:1018px;top:10px;width:45px;height:45px;background:#f8fafd"></div>
<div class="a" style="left:1022px;top:12px;width:40px;height:40px;border-radius:20px;background:#d3d5d9"></div>
<svg class="a" style="left:1030px;top:20px" width="24" height="24" viewBox="0 0 24 24"><path fill="#444746" d="M19.43 12.98c.04-.32.07-.64.07-.98 0-.34-.03-.66-.07-.98l2.11-1.65c.19-.15.24-.42.12-.64l-2-3.46c-.09-.16-.26-.25-.44-.25-.06 0-.12.01-.17.03l-2.49 1c-.52-.4-1.08-.73-1.69-.98l-.38-2.65C14.46 2.18 14.25 2 14 2h-4c-.25 0-.46.18-.49.42l-.38 2.65c-.61.25-1.17.59-1.69.98l-2.49-1c-.06-.02-.12-.03-.18-.03-.17 0-.34.09-.43.25l-2 3.46c-.13.22-.07.49.12.64l2.11 1.65c-.04.32-.07.65-.07.98 0 .33.03.66.07.98l-2.11 1.65c-.19.15-.24.42-.12.64l2 3.46c.09.16.26.25.44.25.06 0 .12-.01.17-.03l2.49-1c.52.4 1.08.73 1.690.98l.38 2.65c.03.24.24.42.49.42h4c.25 0 .46-.18.49-.42l.38-2.65c.61-.25 1.17-.59 1.69-.98l2.49 1c.06.02.12.03.18.03.17 0 .34-.09.43-.25l2-3.46c.12-.22.07-.49-.12-.64l-2.11-1.65zm-1.98-1.71c.04.31.05.52.05.73 0 .21-.02.43-.05.73l-.14 1.13.89.7 1.08.84-.7 1.21-1.27-.51-1.04-.42-.9.68c-.43.32-.84.56-1.25.73l-1.06.43-.16 1.13-.2 1.35h-1.4l-.19-1.35-.16-1.13-1.06-.43c-.43-.18-.83-.41-1.23-.71l-.91-.7-1.06.43-1.27.51-.7-1.21 1.08-.84.89-.7-.14-1.13c-.03-.31-.05-.54-.05-.74s.02-.43.05-.73l.14-1.13-.89-.7-1.08-.84.7-1.21 1.27.51 1.04.42.9-.68c.43-.32.84-.56 1.25-.73l1.06-.43.16-1.13.2-1.35h1.39l.19 1.35.16 1.13 1.06.43c.43.18.83.41 1.23.71l.91.7 1.06-.43 1.27-.51.7 1.21-1.07.85-.89.7.14 1.13z"/><circle cx="12" cy="12" r="3" fill="#444746"/></svg>
<svg class="a" style="left:1072px;top:20px" width="24" height="24" viewBox="0 0 24 24"><path fill="#444746" d="M12 1.8Q14.2 9.8 22.2 12 14.2 14.2 12 22.2 9.8 14.2 1.8 12 9.8 9.8 12 1.8z"/></svg>
<svg class="a" style="left:1114px;top:20px" width="24" height="24" viewBox="0 0 24 24"><g fill="#444746"><circle cx="6" cy="6" r="2"/><circle cx="12" cy="6" r="2"/><circle cx="18" cy="6" r="2"/><circle cx="6" cy="12" r="2"/><circle cx="12" cy="12" r="2"/><circle cx="18" cy="12" r="2"/><circle cx="6" cy="18" r="2"/><circle cx="12" cy="18" r="2"/><circle cx="18" cy="18" r="2"/></g></svg>
<div class="a" style="left:1158px;top:16px;width:32px;height:32px;border-radius:16px;background:#5c6bc0"></div><div class="a" style="left:1170px;top:27px;width:2.4px;height:12px;background:#fff"></div><div class="a" style="left:1170px;top:36.6px;width:8px;height:2.4px;background:#fff"></div>

<!-- quick settings content -->
<div class="txt" style="left:888px;top:81px;font-size:16px;line-height:20px;color:#1f1f1f">Snabbinställningar</div>
<svg class="a" style="left:1156px;top:80px" width="20" height="20" viewBox="0 0 24 24"><path fill="#444746" d="M19 6.41L17.59 5 12 10.59 6.41 5 5 6.41 10.59 12 5 17.59 6.41 19 12 13.41 17.59 19 19 17.59 13.41 12z"/></svg>
<div class="a" style="left:876px;top:102px;width:309px;height:63px;border-radius:4px;background:#fe2c6e"></div>
<div class="a" style="left:883px;top:109px;width:295px;height:49px;background:#fff"></div>
<div class="a" style="left:888px;top:116px;width:288px;height:36px;border-radius:18px;border:1px solid #dcdfe3;background:#f7f9fd"></div>
<div class="txt med" style="left:888px;top:126px;width:288px;text-align:center;font-size:14px;line-height:16px;color:#0b57d0;letter-spacing:0.3px">Visa alla inställningar</div>

<div class="a" style="left:874px;top:168px;width:300px;height:1px;background:#e3e3e3"></div>
<div class="a" style="left:1180px;top:169px;width:9px;height:276px;background:#c1c1c1"></div>

<div class="txt" style="left:890px;top:185px;font-size:13px;line-height:15px;color:#444746;letter-spacing:-0.15px">Appar i Gmail</div>
<div class="txt" style="left:890px;top:219px;font-size:14px;line-height:16px;color:#1f1f1f;letter-spacing:0.15px">Chat och Meet</div>
<div class="txt med" style="left:890px;top:245px;font-size:14px;line-height:16px;color:#1a73e8;letter-spacing:0.3px">Anpassa</div>
<div class="a" style="left:1086px;top:216px;width:72px;height:50px;border:1px solid #dadce0;border-radius:4px;background:#fff;overflow:hidden">
  <div class="a" style="left:0;top:0;width:14px;height:48px;background:#f8f9fa;border-right:1px solid #dadce0"></div>
  <div class="a" style="left:4px;top:9px;width:5px;height:5px;border-radius:3px;background:#1a73e8"></div>
  <div class="a" style="left:4px;top:17px;width:5px;height:5px;border-radius:3px;background:#dadce0"></div>
  <div class="a" style="left:4px;top:25px;width:5px;height:5px;border-radius:3px;background:#dadce0"></div>
  <div class="a" style="left:4px;top:33px;width:5px;height:5px;border-radius:3px;background:#dadce0"></div>
  <div class="a" style="left:18px;top:7px;width:34px;height:3px;border-radius:2px;background:#dadce0"></div>
  <div class="a" style="left:18px;top:15px;width:48px;height:3px;border-radius:2px;background:#dadce0"></div>
  <div class="a" style="left:18px;top:23px;width:48px;height:3px;border-radius:2px;background:#dadce0"></div>
  <div class="a" style="left:18px;top:31px;width:48px;height:3px;border-radius:2px;background:#dadce0"></div>
  <div class="a" style="left:18px;top:39px;width:48px;height:3px;border-radius:2px;background:#dadce0"></div>
</div>
<div class="a" style="left:874px;top:282px;width:300px;height:1px;background:#e3e3e3"></div>

<div class="txt" style="left:890px;top:299px;font-size:13px;line-height:15px;color:#444746">Täthet</div>
<svg class="a" style="left:890px;top:336px" width="20" height="20" viewBox="0 0 20 20"><circle cx="10" cy="10" r="7.6" fill="none" stroke="#1a73e8" stroke-width="2"/><circle cx="10" cy="10" r="4" fill="#1a73e8"/></svg><div class="txt" style="left:926px;top:338px;font-size:14px;line-height:16px;color:#1f1f1f">Standardinställning</div>
<svg class="a" style="left:890px;top:384px" width="20" height="20" viewBox="0 0 20 20"><circle cx="10" cy="10" r="7.6" fill="none" stroke="#444746" stroke-width="2"/></svg><div class="txt" style="left:926px;top:386px;font-size:14px;line-height:16px;color:#1f1f1f">Normal</div>
<svg class="a" style="left:890px;top:432px" width="20" height="20" viewBox="0 0 20 20"><circle cx="10" cy="10" r="7.6" fill="none" stroke="#444746" stroke-width="2"/></svg><div class="txt" style="left:926px;top:434px;font-size:14px;line-height:16px;color:#1f1f1f">Kompakt</div>
<div class="a" style="left:1086px;top:330px;width:72px;height:32px;border:1px solid #c4c7cc;border-radius:4px;background:#fff">
 <div class="a" style="left:5px;top:4px;width:5px;height:5px;border:1px solid #9aa0a6"></div>
 <div class="a" style="left:14px;top:5px;width:50px;height:3px;border-radius:2px;background:#dadce0"></div>
 <div class="a" style="left:14px;top:11px;width:50px;height:17px;border-radius:9px;background:#e8f0fe"></div>
 <div class="a" style="left:21px;top:14px;width:11px;height:11px;border-radius:1.5px;background:#1a73e8"></div>
 <div class="a" style="left:23px;top:16.5px;width:7px;height:1.2px;background:#fff"></div>
 <div class="a" style="left:23px;top:19px;width:7px;height:1.2px;background:#fff"></div>
 <div class="a" style="left:23px;top:21.5px;width:5px;height:1.2px;background:#fff"></div>
</div>
<div class="a" style="left:1086px;top:378px;width:72px;height:32px;border:1px solid #c4c7cc;border-radius:4px;background:#fff">
 <div class="a" style="left:5px;top:5px;width:5px;height:5px;border:1px solid #9aa0a6"></div>
 <div class="a" style="left:14px;top:6px;width:50px;height:3px;border-radius:2px;background:#dadce0"></div>
 <div class="a" style="left:0;top:15px;width:70px;height:1px;background:#dadce0"></div>
 <div class="a" style="left:5px;top:20px;width:5px;height:5px;border:1px solid #9aa0a6"></div>
 <div class="a" style="left:14px;top:21px;width:50px;height:3px;border-radius:2px;background:#dadce0"></div>
</div>
<div class="a" style="left:1086px;top:426px;width:72px;height:32px;border:1px solid #c4c7cc;border-radius:4px;background:#fff">
 <div class="a" style="left:5px;top:3px;width:5px;height:5px;border:1px solid #9aa0a6"></div>
 <div class="a" style="left:14px;top:4px;width:50px;height:3px;border-radius:2px;background:#dadce0"></div>
 <div class="a" style="left:0;top:9px;width:70px;height:1px;background:#dadce0"></div>
 <div class="a" style="left:5px;top:13px;width:5px;height:5px;border:1px solid #9aa0a6"></div>
 <div class="a" style="left:14px;top:14px;width:50px;height:3px;border-radius:2px;background:#dadce0"></div>
 <div class="a" style="left:0;top:19px;width:70px;height:1px;background:#dadce0"></div>
 <div class="a" style="left:5px;top:23px;width:5px;height:5px;border:1px solid #9aa0a6"></div>
 <div class="a" style="left:14px;top:24px;width:50px;height:3px;border-radius:2px;background:#dadce0"></div>
</div>
<div class="a" style="left:874px;top:474px;width:300px;height:1px;background:#e3e3e3"></div>
<div class="txt" style="left:890px;top:491px;font-size:13px;line-height:15px;color:#444746">Tema</div>
<div class="txt med" style="left:1104px;top:490px;font-size:14px;line-height:16px;color:#1a73e8">Visa alla</div>
<div class="a" style="left:890px;top:523px;width:60px;height:40px;border:2px solid #1a73e8;border-radius:5px;background:#f6f8fc;overflow:hidden">
 <div class="a" style="left:0;top:0;width:15px;height:36px;background:#eef2f9"></div>
 <div class="a" style="left:8px;top:6px;width:4px;height:3px;border-top:1px solid #777;border-bottom:1px solid #777"></div>
 <div class="a" style="left:5px;top:15px;width:11px;height:8px;border-radius:4px;background:#d3e3fd"></div>
 <div class="a" style="left:8px;top:17px;width:5px;height:4px;background:#041e49"></div>
 <div class="a" style="left:7px;top:30px;width:5px;height:4px;border:1px solid #888;border-radius:1px"></div>
 <svg class="a" style="left:20px;top:5px" width="7" height="5" viewBox="0 0 30 22"><path d="M2 22h5V9.5L0 4.5V20c0 1.1.9 2 2 2z" fill="#4285f4"/><path d="M23 22h5c1.1 0 2-.9 2-2V4.5l-7 5z" fill="#34a853"/><path d="M23 1v8.5l7-5V3c0-2.5-2.8-3.9-4.8-2.4z" fill="#fbbc04"/><path d="M7 9.5V1l8 6 8-6v8.5l-8 6z" fill="#ea4335"/></svg>
 <div class="a" style="left:29px;top:6px;width:11px;height:3px;background:#c4c7cc;border-radius:1px"></div>
 <div class="a" style="left:18px;top:13px;width:29px;height:10px;border-radius:5px;background:#c2e7ff"></div>
 <div class="a" style="left:22px;top:17px;width:3px;height:3px;background:#444;transform:rotate(45deg)"></div>
 <div class="a" style="left:28px;top:18px;width:12px;height:1px;background:#7a8a99"></div>
 <div class="a" style="left:18px;top:27px;width:35px;height:9px;border-radius:5px;background:#d3e3fd"></div>
 <div class="a" style="left:21px;top:29px;width:4px;height:4px;border:1px solid #456"></div>
 <div class="a" style="left:28px;top:31px;width:18px;height:1px;background:#5f6368"></div>
</div>
</div>
<svg class="a" style="left:958px;top:523px" width="60" height="40" viewBox="0 0 60 40"><defs><filter id="b958523" x="-10%" y="-10%" width="120%" height="120%"><feGaussianBlur stdDeviation="0.6"/></filter><clipPath id="c958523"><rect width="60" height="40" rx="4"/></clipPath><linearGradient id="gch" x1="0" y1="0" x2="0" y2="1"><stop offset="0" stop-color="#100a04"/><stop offset=".18" stop-color="#2a1c0e"/><stop offset=".4" stop-color="#a07a48"/><stop offset=".7" stop-color="#d8b480"/><stop offset="1" stop-color="#b88a58"/></linearGradient></defs><g clip-path="url(#c958523)"><g filter="url(#b958523)"><rect width="60" height="40" fill="url(#gch)"/><rect x="-3" y="18" width="7" height="6" fill="#f0dcb0" opacity=".35"/><rect x="4" y="18" width="7" height="6" fill="#7a5028" opacity=".35"/><rect x="11" y="18" width="7" height="6" fill="#f0dcb0" opacity=".35"/><rect x="18" y="18" width="7" height="6" fill="#7a5028" opacity=".35"/><rect x="25" y="18" width="7" height="6" fill="#f0dcb0" opacity=".35"/><rect x="32" y="18" width="7" height="6" fill="#7a5028" opacity=".35"/><rect x="39" y="18" width="7" height="6" fill="#f0dcb0" opacity=".35"/><rect x="46" y="18" width="7" height="6" fill="#7a5028" opacity=".35"/><rect x="53" y="18" width="7" height="6" fill="#f0dcb0" opacity=".35"/><rect x="0" y="24" width="7" height="6" fill="#7a5028" opacity=".35"/><rect x="7" y="24" width="7" height="6" fill="#f0dcb0" opacity=".35"/><rect x="14" y="24" width="7" height="6" fill="#7a5028" opacity=".35"/><rect x="21" y="24" width="7" height="6" fill="#f0dcb0" opacity=".35"/><rect x="28" y="24" width="7" height="6" fill="#7a5028" opacity=".35"/><rect x="35" y="24" width="7" height="6" fill="#f0dcb0" opacity=".35"/><rect x="42" y="24" width="7" height="6" fill="#7a5028" opacity=".35"/><rect x="49" y="24" width="7" height="6" fill="#f0dcb0" opacity=".35"/><rect x="56" y="24" width="7" height="6" fill="#7a5028" opacity=".35"/><rect x="3" y="30" width="7" height="6" fill="#f0dcb0" opacity=".35"/><rect x="10" y="30" width="7" height="6" fill="#7a5028" opacity=".35"/><rect x="17" y="30" width="7" height="6" fill="#f0dcb0" opacity=".35"/><rect x="24" y="30" width="7" height="6" fill="#7a5028" opacity=".35"/><rect x="31" y="30" width="7" height="6" fill="#f0dcb0" opacity=".35"/><rect x="38" y="30" width="7" height="6" fill="#7a5028" opacity=".35"/><rect x="45" y="30" width="7" height="6" fill="#f0dcb0" opacity=".35"/><rect x="52" y="30" width="7" height="6" fill="#7a5028" opacity=".35"/><rect x="59" y="30" width="7" height="6" fill="#f0dcb0" opacity=".35"/><rect x="6" y="36" width="7" height="6" fill="#7a5028" opacity=".35"/><rect x="13" y="36" width="7" height="6" fill="#f0dcb0" opacity=".35"/><rect x="20" y="36" width="7" height="6" fill="#7a5028" opacity=".35"/><rect x="27" y="36" width="7" height="6" fill="#f0dcb0" opacity=".35"/><rect x="34" y="36" width="7" height="6" fill="#7a5028" opacity=".35"/><rect x="41" y="36" width="7" height="6" fill="#f0dcb0" opacity=".35"/><rect x="48" y="36" width="7" height="6" fill="#7a5028" opacity=".35"/><rect x="55" y="36" width="7" height="6" fill="#f0dcb0" opacity=".35"/><rect x="62" y="36" width="7" height="6" fill="#7a5028" opacity=".35"/><path d="M6 26c0-8 2-14 4-16 2 2 4 8 4 16z" fill="#e8cc98"/><path d="M22 20c0-6 1-9 3-10 2 1 3 4 3 10z" fill="#c8a070"/><path d="M28 34c0-9 2-15 5-17 3 2 5 8 5 17z" fill="#a87a48"/><path d="M38 34c0-6 2-10 4-11 2 1 4 5 4 11z" fill="#6a4620"/><path d="M44 14c0-5 1-8 3-9 2 1 3 4 3 9z" fill="#d8b888"/><path d="M52 38c0-8 2-12 4-13 2 1 4 5 4 13z" fill="#f0d8a8"/><path d="M14 14c0-4 1-6 2-7 1 1 2 3 2 7z" fill="#b89060"/><path d="M54 18c0-5 1-8 3-9 2 1 3 4 3 9z" fill="#c8a070"/></g></g></svg>
<svg class="a" style="left:1026px;top:523px" width="60" height="40" viewBox="0 0 60 40"><defs><filter id="b1026523" x="-10%" y="-10%" width="120%" height="120%"><feGaussianBlur stdDeviation="0.6"/></filter><clipPath id="c1026523"><rect width="60" height="40" rx="4"/></clipPath><linearGradient id="gcy" x1="0" y1="0" x2="0" y2="1"><stop offset="0" stop-color="#4a1a14"/><stop offset=".2" stop-color="#7a3020"/><stop offset=".35" stop-color="#5a2016"/><stop offset=".5" stop-color="#e89038"/><stop offset=".62" stop-color="#f8d070"/><stop offset=".72" stop-color="#8a2a14"/><stop offset="1" stop-color="#4a140c"/></linearGradient></defs><g clip-path="url(#c1026523)"><g filter="url(#b1026523)"><rect width="60" height="40" fill="url(#gcy)"/><path d="M0 6c10-4 20 2 30-2s20-2 30 0v4c-10 2-20 6-30 3S10 12 0 10z" fill="#8a4a4a" opacity=".6"/><path d="M0 18c8 4 14 0 20 6 6-4 10 2 16-2s14 6 24 0v4c-10 2-20 2-30 0S10 30 0 26z" fill="#f8e090" opacity=".7"/><path d="M0 27c15 3 35-1 60 1v12H0z" fill="#4e1810" opacity=".8"/></g></g></svg>
<svg class="a" style="left:1094px;top:523px" width="60" height="40" viewBox="0 0 60 40"><defs><filter id="b1094523" x="-10%" y="-10%" width="120%" height="120%"><feGaussianBlur stdDeviation="0.6"/></filter><clipPath id="c1094523"><rect width="60" height="40" rx="4"/></clipPath><radialGradient id="ggr" cx=".35" cy=".4" r=".8"><stop offset="0" stop-color="#6aae3a"/><stop offset=".6" stop-color="#3a8a22"/><stop offset="1" stop-color="#2a6a18"/></radialGradient></defs><g clip-path="url(#c1094523)"><g filter="url(#b1094523)"><rect width="60" height="40" fill="url(#ggr)"/><path d="M40 8l10 6-4 8 10 2 4 8v8H38l4-10z" fill="#5aa83a" opacity=".8"/><ellipse cx="32" cy="18" rx="6" ry="8" transform="rotate(25 32 18)" fill="#4a4a20"/><path d="M28 12l8 4M27 15l8 4M27 19l8 3" stroke="#d8d090" stroke-width="1.2"/><path d="M30 26l-4 14" stroke="#7ac050" stroke-width="2"/><path d="M42 10l6-3 2 4-5 3z" fill="#b8e080"/></g></g></svg>
<svg class="a" style="left:890px;top:571px" width="60" height="40" viewBox="0 0 60 40"><defs><filter id="b890571" x="-10%" y="-10%" width="120%" height="120%"><feGaussianBlur stdDeviation="0.6"/></filter><clipPath id="c890571"><rect width="60" height="40" rx="4"/></clipPath><radialGradient id="gpp" cx=".3" cy=".5" r=".5"><stop offset="0" stop-color="#dce2e8"/><stop offset=".5" stop-color="#6a7078"/><stop offset="1" stop-color="#141618"/></radialGradient></defs><g clip-path="url(#c890571)"><g filter="url(#b890571)"><rect width="60" height="40" fill="#0e0e10"/><circle cx="6" cy="6" r="8" fill="url(#gpp)" stroke="#8a9098" stroke-width=".8"/><circle cx="20" cy="4" r="8" fill="url(#gpp)" stroke="#8a9098" stroke-width=".8"/><circle cx="36" cy="3" r="9" fill="url(#gpp)" stroke="#8a9098" stroke-width=".8"/><circle cx="52" cy="4" r="8" fill="url(#gpp)" stroke="#8a9098" stroke-width=".8"/><circle cx="10" cy="20" r="8" fill="url(#gpp)" stroke="#8a9098" stroke-width=".8"/><circle cx="24" cy="19" r="8" fill="url(#gpp)" stroke="#8a9098" stroke-width=".8"/><circle cx="40" cy="18" r="9" fill="url(#gpp)" stroke="#8a9098" stroke-width=".8"/><circle cx="56" cy="18" r="7" fill="url(#gpp)" stroke="#8a9098" stroke-width=".8"/><circle cx="6" cy="34" r="8" fill="url(#gpp)" stroke="#8a9098" stroke-width=".8"/><circle cx="20" cy="34" r="8" fill="url(#gpp)" stroke="#8a9098" stroke-width=".8"/><circle cx="36" cy="34" r="8" fill="url(#gpp)" stroke="#8a9098" stroke-width=".8"/><circle cx="52" cy="34" r="8" fill="url(#gpp)" stroke="#8a9098" stroke-width=".8"/></g></g></svg>
<svg class="a" style="left:958px;top:571px" width="60" height="40" viewBox="0 0 60 40"><defs><filter id="b958571" x="-10%" y="-10%" width="120%" height="120%"><feGaussianBlur stdDeviation="0.6"/></filter><clipPath id="c958571"><rect width="60" height="40" rx="4"/></clipPath></defs><g clip-path="url(#c958571)"><g filter="url(#b958571)"><rect width="60" height="40" fill="#7a3a18"/><ellipse cx="18.1" cy="4.3" rx="4.0" ry="1.1" transform="rotate(137 18.1 4.3)" fill="#c87030"/><ellipse cx="20.7" cy="0.4" rx="3.5" ry="1.1" transform="rotate(111 20.7 0.4)" fill="#a85020"/><ellipse cx="2.3" cy="1.8" rx="3.3" ry="2.2" transform="rotate(31 2.3 1.8)" fill="#e0a050"/><ellipse cx="37.1" cy="22.5" rx="2.2" ry="1.9" transform="rotate(12 37.1 22.5)" fill="#e0a050"/><ellipse cx="0.9" cy="34.1" rx="2.9" ry="1.2" transform="rotate(30 0.9 34.1)" fill="#f0c070"/><ellipse cx="17.1" cy="32.3" rx="2.5" ry="1.9" transform="rotate(163 17.1 32.3)" fill="#e0a050"/><ellipse cx="21.1" cy="21.0" rx="2.2" ry="1.1" transform="rotate(52 21.1 21.0)" fill="#a85020"/><ellipse cx="40.2" cy="16.0" rx="2.9" ry="1.9" transform="rotate(116 40.2 16.0)" fill="#5a2010"/><ellipse cx="16.6" cy="31.4" rx="4.1" ry="1.4" transform="rotate(147 16.6 31.4)" fill="#5a2010"/><ellipse cx="30.6" cy="34.8" rx="4.2" ry="1.4" transform="rotate(18 30.6 34.8)" fill="#c87030"/><ellipse cx="29.7" cy="4.9" rx="3.0" ry="2.4" transform="rotate(107 29.7 4.9)" fill="#c87030"/><ellipse cx="57.6" cy="1.3" rx="3.7" ry="2.2" transform="rotate(80 57.6 1.3)" fill="#5a2010"/><ellipse cx="41.1" cy="23.0" rx="3.7" ry="1.7" transform="rotate(23 41.1 23.0)" fill="#5a2010"/><ellipse cx="27.4" cy="25.9" rx="2.2" ry="2.1" transform="rotate(165 27.4 25.9)" fill="#f0c070"/><ellipse cx="59.6" cy="32.5" rx="2.9" ry="1.6" transform="rotate(171 59.6 32.5)" fill="#5a2010"/><ellipse cx="-0.6" cy="17.4" rx="2.5" ry="1.2" transform="rotate(15 -0.6 17.4)" fill="#e0a050"/><ellipse cx="45.6" cy="3.4" rx="2.7" ry="1.6" transform="rotate(127 45.6 3.4)" fill="#c87030"/><ellipse cx="8.3" cy="14.9" rx="2.8" ry="1.2" transform="rotate(110 8.3 14.9)" fill="#d88838"/><ellipse cx="32.1" cy="27.7" rx="5.0" ry="2.0" transform="rotate(97 32.1 27.7)" fill="#e0a050"/><ellipse cx="7.4" cy="5.4" rx="2.7" ry="1.4" transform="rotate(124 7.4 5.4)" fill="#d88838"/><ellipse cx="34.5" cy="9.0" rx="2.0" ry="1.6" transform="rotate(94 34.5 9.0)" fill="#f0c070"/><ellipse cx="33.1" cy="38.0" rx="4.1" ry="1.8" transform="rotate(158 33.1 38.0)" fill="#3a1408"/><ellipse cx="39.9" cy="0.3" rx="4.7" ry="2.2" transform="rotate(174 39.9 0.3)" fill="#d88838"/><ellipse cx="32.7" cy="14.7" rx="3.2" ry="1.7" transform="rotate(102 32.7 14.7)" fill="#c87030"/><ellipse cx="9.8" cy="39.4" rx="3.3" ry="1.2" transform="rotate(153 9.8 39.4)" fill="#c87030"/><ellipse cx="4.3" cy="21.8" rx="3.6" ry="2.4" transform="rotate(157 4.3 21.8)" fill="#c87030"/><ellipse cx="2.4" cy="6.7" rx="3.1" ry="2.0" transform="rotate(88 2.4 6.7)" fill="#f0c070"/><ellipse cx="20.6" cy="3.2" rx="4.5" ry="2.5" transform="rotate(119 20.6 3.2)" fill="#a85020"/><ellipse cx="28.0" cy="1.6" rx="2.3" ry="1.5" transform="rotate(67 28.0 1.6)" fill="#a85020"/><ellipse cx="49.4" cy="4.8" rx="2.1" ry="2.4" transform="rotate(135 49.4 4.8)" fill="#5a2010"/><ellipse cx="7.1" cy="20.8" rx="2.1" ry="1.8" transform="rotate(164 7.1 20.8)" fill="#d88838"/><ellipse cx="3.6" cy="33.5" rx="3.6" ry="2.4" transform="rotate(91 3.6 33.5)" fill="#d88838"/><ellipse cx="11.8" cy="20.7" rx="3.5" ry="2.0" transform="rotate(156 11.8 20.7)" fill="#d88838"/><ellipse cx="46.9" cy="29.8" rx="2.6" ry="1.4" transform="rotate(102 46.9 29.8)" fill="#3a1408"/><ellipse cx="47.8" cy="6.4" rx="3.5" ry="2.1" transform="rotate(7 47.8 6.4)" fill="#d88838"/><ellipse cx="15.3" cy="8.9" rx="4.1" ry="2.4" transform="rotate(114 15.3 8.9)" fill="#d88838"/><ellipse cx="56.1" cy="39.5" rx="4.9" ry="1.5" transform="rotate(56 56.1 39.5)" fill="#c87030"/><ellipse cx="12.1" cy="6.3" rx="2.6" ry="1.9" transform="rotate(156 12.1 6.3)" fill="#d88838"/><ellipse cx="-1.9" cy="36.2" rx="3.0" ry="2.0" transform="rotate(169 -1.9 36.2)" fill="#c87030"/><ellipse cx="54.4" cy="30.9" rx="4.3" ry="1.7" transform="rotate(45 54.4 30.9)" fill="#a85020"/><ellipse cx="46.9" cy="12.0" rx="4.4" ry="2.5" transform="rotate(101 46.9 12.0)" fill="#a85020"/><ellipse cx="22.9" cy="37.8" rx="4.2" ry="1.3" transform="rotate(32 22.9 37.8)" fill="#c87030"/><ellipse cx="7.4" cy="36.0" rx="4.4" ry="1.2" transform="rotate(152 7.4 36.0)" fill="#a85020"/><ellipse cx="38.8" cy="12.7" rx="3.6" ry="1.2" transform="rotate(3 38.8 12.7)" fill="#d88838"/><ellipse cx="58.2" cy="25.3" rx="3.6" ry="2.4" transform="rotate(111 58.2 25.3)" fill="#d88838"/><ellipse cx="10.1" cy="34.7" rx="2.1" ry="1.3" transform="rotate(128 10.1 34.7)" fill="#e0a050"/><ellipse cx="45.3" cy="11.7" rx="3.6" ry="2.3" transform="rotate(15 45.3 11.7)" fill="#3a1408"/><ellipse cx="19.9" cy="17.2" rx="3.8" ry="2.4" transform="rotate(107 19.9 17.2)" fill="#d88838"/><ellipse cx="54.9" cy="19.1" rx="3.6" ry="1.8" transform="rotate(4 54.9 19.1)" fill="#d88838"/><ellipse cx="25.3" cy="5.7" rx="2.0" ry="2.2" transform="rotate(44 25.3 5.7)" fill="#e0a050"/><ellipse cx="27.4" cy="28.5" rx="3.7" ry="1.5" transform="rotate(132 27.4 28.5)" fill="#f0c070"/><ellipse cx="32.4" cy="30.9" rx="2.3" ry="1.8" transform="rotate(63 32.4 30.9)" fill="#e0a050"/><ellipse cx="15.2" cy="30.4" rx="3.5" ry="1.8" transform="rotate(16 15.2 30.4)" fill="#a85020"/><ellipse cx="18.2" cy="38.9" rx="3.8" ry="1.3" transform="rotate(70 18.2 38.9)" fill="#a85020"/><ellipse cx="29.5" cy="31.9" rx="3.5" ry="1.4" transform="rotate(133 29.5 31.9)" fill="#5a2010"/><ellipse cx="55.2" cy="35.5" rx="2.6" ry="1.7" transform="rotate(106 55.2 35.5)" fill="#c87030"/><ellipse cx="22.3" cy="11.3" rx="4.0" ry="1.6" transform="rotate(54 22.3 11.3)" fill="#3a1408"/><ellipse cx="16.8" cy="3.1" rx="4.3" ry="2.4" transform="rotate(164 16.8 3.1)" fill="#3a1408"/><ellipse cx="20.7" cy="8.6" rx="2.4" ry="1.7" transform="rotate(24 20.7 8.6)" fill="#a85020"/><ellipse cx="52.9" cy="4.8" rx="4.0" ry="1.3" transform="rotate(180 52.9 4.8)" fill="#a85020"/><ellipse cx="59.6" cy="15.0" rx="3.3" ry="1.5" transform="rotate(23 59.6 15.0)" fill="#3a1408"/><ellipse cx="20.7" cy="12.2" rx="3.4" ry="2.1" transform="rotate(98 20.7 12.2)" fill="#5a2010"/><ellipse cx="30.1" cy="10.4" rx="4.9" ry="1.2" transform="rotate(58 30.1 10.4)" fill="#c87030"/><ellipse cx="3.2" cy="9.4" rx="4.7" ry="1.3" transform="rotate(33 3.2 9.4)" fill="#d88838"/><ellipse cx="24.2" cy="36.3" rx="4.5" ry="1.4" transform="rotate(38 24.2 36.3)" fill="#f0c070"/><ellipse cx="55.0" cy="22.0" rx="4.1" ry="1.1" transform="rotate(14 55.0 22.0)" fill="#d88838"/><ellipse cx="40.7" cy="15.9" rx="2.2" ry="2.4" transform="rotate(162 40.7 15.9)" fill="#c87030"/><ellipse cx="47.7" cy="1.5" rx="4.6" ry="1.1" transform="rotate(31 47.7 1.5)" fill="#a85020"/><ellipse cx="-1.3" cy="39.8" rx="3.3" ry="2.4" transform="rotate(159 -1.3 39.8)" fill="#e0a050"/><ellipse cx="0.7" cy="27.8" rx="4.8" ry="2.5" transform="rotate(67 0.7 27.8)" fill="#c87030"/><ellipse cx="22" cy="29" rx="9" ry="3" transform="rotate(-15 22 29)" fill="#f0d8b0" opacity=".8"/></g></g></svg>
<svg class="a" style="left:1026px;top:571px" width="60" height="40" viewBox="0 0 60 40"><defs><filter id="b1026571" x="-10%" y="-10%" width="120%" height="120%"><feGaussianBlur stdDeviation="0.6"/></filter><clipPath id="c1026571"><rect width="60" height="40" rx="4"/></clipPath></defs><g clip-path="url(#c1026571)"><g filter="url(#b1026571)"><rect width="60" height="40" fill="#1c2028"/><circle cx="37.4" cy="29.7" r="2.6" fill="#d8d078" opacity="0.93"/><circle cx="44.4" cy="36.9" r="1.6" fill="#d8d078" opacity="0.74"/><circle cx="56.6" cy="26.0" r="2.7" fill="#68b8a8" opacity="0.60"/><circle cx="28.1" cy="9.9" r="2.3" fill="#d0a888" opacity="0.78"/><circle cx="0.8" cy="8.7" r="1.9" fill="#6a88d0" opacity="0.92"/><circle cx="45.9" cy="6.4" r="2.6" fill="#78d0a0" opacity="0.61"/><circle cx="37.0" cy="5.1" r="1.6" fill="#78d0a0" opacity="0.90"/><circle cx="12.6" cy="8.6" r="2.8" fill="#e0c0e0" opacity="0.90"/><circle cx="17.4" cy="38.5" r="2.2" fill="#e088b8" opacity="0.82"/><circle cx="12.3" cy="37.6" r="2.4" fill="#a0c878" opacity="0.94"/><circle cx="53.6" cy="12.0" r="2.0" fill="#68b8a8" opacity="0.62"/><circle cx="8.7" cy="2.6" r="2.0" fill="#6a88d0" opacity="0.79"/><circle cx="0.2" cy="27.1" r="2.0" fill="#a0c878" opacity="0.67"/><circle cx="49.1" cy="19.2" r="2.0" fill="#68b8a8" opacity="0.74"/><circle cx="42.3" cy="2.3" r="2.8" fill="#78d0a0" opacity="0.56"/><circle cx="45.0" cy="33.8" r="1.6" fill="#d8d078" opacity="0.87"/><circle cx="22.0" cy="23.1" r="1.6" fill="#e088b8" opacity="0.57"/><circle cx="10.9" cy="38.2" r="1.8" fill="#a0c878" opacity="0.85"/><circle cx="55.8" cy="37.7" r="2.0" fill="#68b8a8" opacity="0.69"/><circle cx="31.5" cy="31.0" r="1.7" fill="#e088b8" opacity="0.85"/><circle cx="47.8" cy="34.4" r="1.6" fill="#d8d078" opacity="0.93"/><circle cx="5.5" cy="13.6" r="2.3" fill="#6a88d0" opacity="0.92"/><circle cx="20.4" cy="37.0" r="2.3" fill="#e088b8" opacity="0.67"/><circle cx="19.0" cy="7.1" r="1.7" fill="#e0c0e0" opacity="0.61"/><circle cx="41.4" cy="39.9" r="1.8" fill="#d8d078" opacity="0.57"/><circle cx="59.2" cy="21.3" r="2.1" fill="#68b8a8" opacity="0.64"/><circle cx="35.6" cy="33.1" r="2.1" fill="#d8d078" opacity="0.72"/><circle cx="3.3" cy="36.6" r="1.6" fill="#a0c878" opacity="0.75"/><circle cx="50.3" cy="5.2" r="2.5" fill="#78d0a0" opacity="0.93"/><circle cx="37.8" cy="31.5" r="1.7" fill="#d8d078" opacity="0.72"/><circle cx="9.0" cy="33.8" r="2.0" fill="#a0c878" opacity="0.73"/><circle cx="60.0" cy="34.1" r="2.8" fill="#68b8a8" opacity="0.73"/><circle cx="29.3" cy="29.2" r="2.2" fill="#e088b8" opacity="0.67"/><circle cx="24.2" cy="5.9" r="2.1" fill="#d0a888" opacity="0.95"/><circle cx="57.6" cy="25.1" r="2.2" fill="#68b8a8" opacity="0.69"/><circle cx="5.3" cy="10.9" r="2.5" fill="#6a88d0" opacity="0.90"/><circle cx="21.7" cy="31.4" r="2.5" fill="#e088b8" opacity="0.83"/><circle cx="39.8" cy="30.4" r="2.0" fill="#d8d078" opacity="0.83"/><circle cx="16.9" cy="19.4" r="2.5" fill="#9a78d0" opacity="0.83"/><circle cx="17.6" cy="37.8" r="2.4" fill="#e088b8" opacity="0.78"/><circle cx="0.7" cy="21.9" r="1.9" fill="#f0a8c8" opacity="0.82"/><circle cx="27.8" cy="32.7" r="2.4" fill="#e088b8" opacity="0.87"/><circle cx="20.9" cy="25.8" r="2.5" fill="#e088b8" opacity="0.88"/><circle cx="21.0" cy="33.7" r="2.6" fill="#e088b8" opacity="0.83"/><circle cx="58.6" cy="38.3" r="2.2" fill="#68b8a8" opacity="0.76"/><circle cx="10.0" cy="33.5" r="2.7" fill="#a0c878" opacity="0.74"/><circle cx="41.5" cy="28.8" r="2.5" fill="#d8d078" opacity="0.62"/><circle cx="46.8" cy="23.2" r="2.4" fill="#68b8a8" opacity="0.72"/><circle cx="37.4" cy="31.0" r="2.4" fill="#d8d078" opacity="0.84"/><circle cx="1.7" cy="6.4" r="2.1" fill="#6a88d0" opacity="0.81"/><circle cx="13.1" cy="27.4" r="2.4" fill="#f0a8c8" opacity="0.57"/><circle cx="28.3" cy="9.0" r="1.7" fill="#d0a888" opacity="0.60"/><circle cx="19.0" cy="7.3" r="1.8" fill="#e0c0e0" opacity="0.56"/><circle cx="27.9" cy="15.2" r="2.3" fill="#d0a888" opacity="0.79"/><circle cx="14.3" cy="36.1" r="1.6" fill="#a0c878" opacity="0.71"/><circle cx="16.7" cy="16.4" r="1.7" fill="#9a78d0" opacity="0.88"/><circle cx="22.4" cy="1.4" r="2.3" fill="#d0a888" opacity="0.59"/><circle cx="32.7" cy="13.6" r="2.3" fill="#78d0a0" opacity="0.93"/><circle cx="49.1" cy="16.8" r="2.6" fill="#68b8a8" opacity="0.81"/><circle cx="22.2" cy="5.7" r="2.3" fill="#e0c0e0" opacity="0.78"/><circle cx="57.4" cy="38.7" r="2.3" fill="#68b8a8" opacity="0.69"/><circle cx="53.6" cy="0.0" r="1.7" fill="#78d0a0" opacity="0.78"/><circle cx="36.9" cy="5.6" r="2.4" fill="#78d0a0" opacity="0.91"/><circle cx="22.6" cy="17.3" r="1.9" fill="#9a78d0" opacity="0.67"/><circle cx="58.3" cy="15.2" r="2.8" fill="#68b8a8" opacity="0.92"/><circle cx="35.7" cy="10.4" r="2.8" fill="#78d0a0" opacity="0.75"/><circle cx="24.9" cy="12.8" r="2.8" fill="#e0c0e0" opacity="0.75"/><circle cx="17.2" cy="19.1" r="1.7" fill="#9a78d0" opacity="0.80"/><circle cx="26.6" cy="11.7" r="2.5" fill="#d0a888" opacity="0.88"/><circle cx="0.8" cy="21.3" r="1.9" fill="#f0a8c8" opacity="0.92"/><circle cx="46.9" cy="9.8" r="1.9" fill="#78d0a0" opacity="0.61"/><circle cx="59.3" cy="11.7" r="2.3" fill="#68b8a8" opacity="0.74"/><circle cx="38.7" cy="24.2" r="2.5" fill="#d8d078" opacity="0.60"/><circle cx="45.6" cy="12.0" r="2.2" fill="#78d0a0" opacity="0.68"/><circle cx="17.8" cy="21.2" r="2.2" fill="#f0a8c8" opacity="0.69"/><circle cx="44.7" cy="23.6" r="1.6" fill="#d8d078" opacity="0.65"/><circle cx="27.3" cy="36.7" r="2.7" fill="#e088b8" opacity="0.77"/><circle cx="0.9" cy="31.1" r="2.1" fill="#a0c878" opacity="0.78"/><circle cx="42.5" cy="25.3" r="2.2" fill="#d8d078" opacity="0.91"/><circle cx="23.1" cy="15.7" r="2.6" fill="#9a78d0" opacity="0.63"/><circle cx="17.8" cy="33.2" r="1.7" fill="#e088b8" opacity="0.88"/><circle cx="41.7" cy="17.3" r="1.9" fill="#78d0a0" opacity="0.86"/><circle cx="54.6" cy="5.7" r="2.2" fill="#78d0a0" opacity="0.77"/><circle cx="29.9" cy="13.2" r="1.8" fill="#d0a888" opacity="0.78"/><circle cx="48.7" cy="2.7" r="1.9" fill="#78d0a0" opacity="0.88"/><circle cx="47.5" cy="26.5" r="1.6" fill="#68b8a8" opacity="0.84"/><circle cx="58.7" cy="39.9" r="2.4" fill="#68b8a8" opacity="0.57"/><circle cx="50.5" cy="8.8" r="2.4" fill="#78d0a0" opacity="0.93"/><circle cx="42.7" cy="5.4" r="2.0" fill="#78d0a0" opacity="0.92"/><circle cx="9.0" cy="24.4" r="2.1" fill="#f0a8c8" opacity="0.61"/><circle cx="37.3" cy="1.7" r="1.7" fill="#d0a888" opacity="0.70"/><circle cx="4.3" cy="2.3" r="2.3" fill="#6a88d0" opacity="0.85"/><circle cx="52.7" cy="5.4" r="2.1" fill="#78d0a0" opacity="0.68"/><circle cx="36.0" cy="19.6" r="2.7" fill="#d8d078" opacity="0.70"/><circle cx="3.3" cy="27.9" r="1.8" fill="#a0c878" opacity="0.80"/><circle cx="30.4" cy="36.4" r="2.3" fill="#e088b8" opacity="0.80"/><circle cx="15.8" cy="22.1" r="1.9" fill="#f0a8c8" opacity="0.85"/><circle cx="31.0" cy="5.4" r="1.9" fill="#d0a888" opacity="0.70"/><circle cx="44.2" cy="7.2" r="2.5" fill="#78d0a0" opacity="0.81"/><circle cx="5.1" cy="26.7" r="1.7" fill="#a0c878" opacity="0.60"/><circle cx="35.6" cy="9.5" r="2.7" fill="#78d0a0" opacity="0.74"/><circle cx="19.4" cy="31.9" r="1.6" fill="#e088b8" opacity="0.84"/><circle cx="3.2" cy="6.0" r="2.7" fill="#6a88d0" opacity="0.82"/><circle cx="13.4" cy="4.6" r="2.8" fill="#e0c0e0" opacity="0.82"/><circle cx="49.2" cy="5.6" r="2.3" fill="#78d0a0" opacity="0.69"/><circle cx="14.1" cy="13.3" r="2.3" fill="#9a78d0" opacity="0.69"/><circle cx="23.1" cy="5.5" r="2.6" fill="#d0a888" opacity="0.81"/><circle cx="48.3" cy="17.3" r="2.6" fill="#78d0a0" opacity="0.76"/><circle cx="35.6" cy="22.9" r="2.5" fill="#d8d078" opacity="0.71"/><circle cx="5.8" cy="1.3" r="1.8" fill="#6a88d0" opacity="0.57"/><circle cx="53.4" cy="19.2" r="2.5" fill="#68b8a8" opacity="0.55"/><circle cx="28.2" cy="35.6" r="2.3" fill="#e088b8" opacity="0.72"/><circle cx="27.9" cy="4.0" r="1.8" fill="#d0a888" opacity="0.61"/><circle cx="22.5" cy="15.4" r="2.7" fill="#9a78d0" opacity="0.61"/><circle cx="15.2" cy="11.1" r="1.8" fill="#9a78d0" opacity="0.66"/><circle cx="14.1" cy="19.3" r="1.6" fill="#f0a8c8" opacity="0.92"/><circle cx="22.1" cy="37.5" r="2.4" fill="#e088b8" opacity="0.82"/><circle cx="28.3" cy="37.8" r="1.7" fill="#e088b8" opacity="0.82"/><circle cx="17.5" cy="27.0" r="2.5" fill="#f0a8c8" opacity="0.62"/><circle cx="12.1" cy="1.0" r="1.9" fill="#6a88d0" opacity="0.58"/><circle cx="24.1" cy="38.9" r="2.0" fill="#e088b8" opacity="0.67"/><circle cx="28.1" cy="11.3" r="2.5" fill="#d0a888" opacity="0.84"/><circle cx="9.8" cy="9.6" r="2.4" fill="#6a88d0" opacity="0.93"/><circle cx="38.8" cy="17.2" r="2.8" fill="#78d0a0" opacity="0.55"/><circle cx="3.7" cy="31.2" r="2.1" fill="#a0c878" opacity="0.57"/><circle cx="32.9" cy="39.6" r="2.2" fill="#e088b8" opacity="0.69"/><circle cx="5.6" cy="2.8" r="2.7" fill="#6a88d0" opacity="0.75"/><circle cx="56.1" cy="2.2" r="1.9" fill="#78d0a0" opacity="0.57"/><circle cx="23.8" cy="2.4" r="1.9" fill="#d0a888" opacity="0.71"/><circle cx="18.4" cy="2.1" r="1.6" fill="#e0c0e0" opacity="0.94"/><circle cx="10.8" cy="20.3" r="2.1" fill="#f0a8c8" opacity="0.76"/><circle cx="5.1" cy="12.6" r="1.7" fill="#6a88d0" opacity="0.77"/><circle cx="55.3" cy="23.9" r="2.6" fill="#68b8a8" opacity="0.64"/><circle cx="1.0" cy="21.6" r="2.2" fill="#f0a8c8" opacity="0.78"/><circle cx="22.6" cy="25.0" r="2.5" fill="#e088b8" opacity="0.92"/><circle cx="18.5" cy="18.0" r="2.6" fill="#9a78d0" opacity="0.64"/><circle cx="6.9" cy="12.5" r="1.7" fill="#6a88d0" opacity="0.86"/><circle cx="49.2" cy="12.5" r="1.8" fill="#78d0a0" opacity="0.58"/><circle cx="14.7" cy="3.4" r="2.1" fill="#e0c0e0" opacity="0.78"/><circle cx="14.7" cy="2.5" r="2.4" fill="#e0c0e0" opacity="0.57"/><circle cx="12.0" cy="11.4" r="2.0" fill="#9a78d0" opacity="0.59"/><circle cx="25.2" cy="12.6" r="2.5" fill="#e0c0e0" opacity="0.77"/><circle cx="53.8" cy="26.2" r="2.5" fill="#68b8a8" opacity="0.78"/><circle cx="26.5" cy="32.7" r="2.4" fill="#e088b8" opacity="0.93"/><circle cx="43.7" cy="28.0" r="1.9" fill="#d8d078" opacity="0.87"/><circle cx="22.9" cy="5.2" r="1.7" fill="#d0a888" opacity="0.62"/><circle cx="15.8" cy="27.0" r="1.9" fill="#f0a8c8" opacity="0.58"/><circle cx="45.8" cy="22.3" r="1.6" fill="#68b8a8" opacity="0.57"/><circle cx="7.8" cy="14.3" r="2.6" fill="#9a78d0" opacity="0.93"/><circle cx="36.7" cy="9.2" r="2.1" fill="#78d0a0" opacity="0.69"/><circle cx="19.8" cy="0.5" r="2.3" fill="#d0a888" opacity="0.88"/><circle cx="43.6" cy="3.8" r="2.2" fill="#78d0a0" opacity="0.62"/><circle cx="42.6" cy="17.8" r="2.7" fill="#78d0a0" opacity="0.87"/><circle cx="7.1" cy="12.7" r="2.7" fill="#6a88d0" opacity="0.73"/><circle cx="26.0" cy="17.7" r="2.5" fill="#9a78d0" opacity="0.92"/><circle cx="32.0" cy="38.8" r="2.3" fill="#e088b8" opacity="0.59"/><circle cx="48.9" cy="16.8" r="1.7" fill="#68b8a8" opacity="0.94"/><circle cx="2.0" cy="23.1" r="2.2" fill="#f0a8c8" opacity="0.90"/><circle cx="23.6" cy="8.6" r="1.9" fill="#e0c0e0" opacity="0.63"/><circle cx="33.7" cy="14.3" r="2.5" fill="#78d0a0" opacity="0.65"/><circle cx="21.1" cy="9.9" r="2.8" fill="#e0c0e0" opacity="0.89"/><circle cx="51.0" cy="24.7" r="2.1" fill="#68b8a8" opacity="0.61"/><circle cx="49.9" cy="19.6" r="1.6" fill="#68b8a8" opacity="0.62"/><circle cx="5.9" cy="28.7" r="2.7" fill="#a0c878" opacity="0.63"/><circle cx="47.8" cy="13.0" r="2.4" fill="#78d0a0" opacity="0.90"/><circle cx="37.4" cy="32.0" r="2.1" fill="#d8d078" opacity="0.55"/><circle cx="30.7" cy="23.5" r="1.8" fill="#d8d078" opacity="0.71"/><circle cx="19.0" cy="1.1" r="2.0" fill="#e0c0e0" opacity="0.70"/><circle cx="28.6" cy="28.1" r="2.1" fill="#e088b8" opacity="0.94"/><circle cx="48.9" cy="37.0" r="2.4" fill="#d8d078" opacity="0.82"/></g></g></svg>
<svg class="a" style="left:1094px;top:571px" width="60" height="40" viewBox="0 0 60 40"><defs><filter id="b1094571" x="-10%" y="-10%" width="120%" height="120%"><feGaussianBlur stdDeviation="0.6"/></filter><clipPath id="c1094571"><rect width="60" height="40" rx="4"/></clipPath><linearGradient id="ghs" x1="0" y1="0" x2="0" y2="1"><stop offset="0" stop-color="#b89ab8"/><stop offset=".2" stop-color="#e8c8c8"/><stop offset=".28" stop-color="#8a5a5a"/><stop offset=".5" stop-color="#a04a30"/><stop offset="1" stop-color="#8a3a24"/></linearGradient></defs><g clip-path="url(#c1094571)"><g filter="url(#b1094571)"><rect width="60" height="40" fill="url(#ghs)"/><path d="M24 8c6 0 10-2 16-1s10 1 20 0v-3c-12 0-20 3-36 4z" fill="#8a80a8" opacity=".7"/><path d="M34 12l26-2v30H40c8-6 6-14-6-28z" fill="#c06a40" opacity=".8"/><path d="M20 13c5 3 9 6 8 12-1 6-6 10-4 15h-4c-2-5 3-9 4-14 1-5-3-9-7-12z" fill="#3a5a70"/><path d="M0 14l18 0c-6 8-10 18-6 26H0z" fill="#6a2a1a" opacity=".7"/></g></g></svg>
<div class="a" style="left:874px;top:627px;width:300px;height:1px;background:#e3e3e3"></div>
<div class="txt" style="left:890px;top:644px;font-size:13px;line-height:15px;color:#444746">Inkorgstyp</div>
<svg class="a" style="left:890px;top:690px" width="20" height="20" viewBox="0 0 20 20"><circle cx="10" cy="10" r="7.6" fill="none" stroke="#1a73e8" stroke-width="2"/><circle cx="10" cy="10" r="4" fill="#1a73e8"/></svg><div class="txt" style="left:926px;top:676px;font-size:14px;line-height:16px;color:#1f1f1f">Standard</div>
<div class="txt med" style="left:926px;top:705px;font-size:14px;line-height:16px;color:#1a73e8;letter-spacing:0.3px">Anpassa</div>
<div class="a" style="left:1086px;top:675px;width:72px;height:50px;border:1px solid #c4c7cc;border-radius:4px;background:#fff">
 <div class="a" style="left:0;top:9px;width:70px;height:1px;background:#dadce0"></div>
 <div class="a" style="left:0;top:19px;width:70px;height:1px;background:#dadce0"></div>
 <div class="a" style="left:0;top:29px;width:70px;height:1px;background:#dadce0"></div>
 <div class="a" style="left:0;top:39px;width:70px;height:1px;background:#dadce0"></div>
</div>
<div class="a" style="left:873px;top:741px;width:319px;height:18px;overflow:hidden">
 <div class="a" style="left:213px;top:0;width:72px;height:40px;border:1px solid #c4c7cc;border-radius:4px;background:#fff">
  <div class="a" style="left:4px;top:4px;width:11px;height:3px;border-radius:1px;background:#9aa0a6"></div>
  <svg class="a" style="left:47px;top:8px" width="18" height="12" viewBox="0 0 18 12"><path fill="none" stroke="#f29900" stroke-width="2" d="M2 2h9l4 5-4 5"/></svg>
 </div>
</div>
<!-- side chevron -->
<div class="a" style="left:1184px;top:727px;width:40px;height:40px;border-radius:20px;background:#fff;box-shadow:0 1px 3px rgba(0,0,0,.3)"></div>
<svg class="a" style="left:1188px;top:737px" width="20" height="20" viewBox="0 0 24 24"><path fill="#1f1f1f" d="M15.41 7.41L14 6l-6 6 6 6 1.41-1.41L10.83 12z"/></svg>

<!-- footer -->
<div class="a" style="left:269px;top:512px;width:185px;height:6px;border-radius:3px;background:#dfe1e5"></div>
<div class="a" style="left:269px;top:512px;width:5px;height:6px;border-radius:3px;background:#5f6368"></div>
<div class="txt" style="left:269px;top:529px;font-size:12px;line-height:14px;color:#444746;letter-spacing:-0.25px">2 % av 15 GB används</div>
<svg class="a" style="left:395px;top:525px" width="18" height="18" viewBox="0 0 24 24"><path fill="#444746" d="M19 19H5V5h7V3H5c-1.11 0-2 .9-2 2v14c0 1.1.89 2 2 2h14c1.1 0 2-.9 2-2v-7h-2v7zM14 3v2h3.59l-9.83 9.83 1.41 1.41L19 6.41V10h2V3h-7z"/></svg>
<div class="txt" style="left:456px;top:508px;font-size:12px;line-height:14px;color:#444746">Villkor · Integritet · Programpolicy</div>
<div class="a" style="left:600px;top:505px;width:223px;font-size:12px;line-height:20px;color:#444746;text-align:right">Senaste kontoaktivitet: för 0<br>minuter sedan<br>Öppet på 1 annan plats ·<br>Information</div>

</body></html>
